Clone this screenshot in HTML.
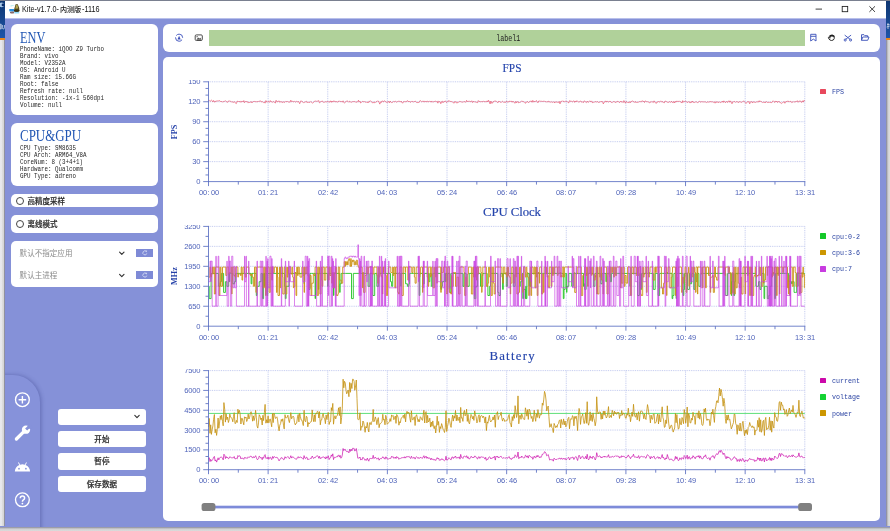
<!DOCTYPE html>
<html lang="zh">
<head>
<meta charset="utf-8">
<title>Kite-v1.7.0-内测版-1116</title>
<style>
*{box-sizing:border-box;margin:0;padding:0}
html,body{width:890px;height:531px;overflow:hidden;background:#d9d9d9;font-family:"Liberation Sans",sans-serif}
.abs,.card,.btn{position:absolute}
#desk-l{left:0;top:0;width:6px;height:531px;background:linear-gradient(90deg,#e9eaee 0,#e6e7ea 30%,#d9d9d9 45%,#d6d6d6 62%,#8a8c9a 76%,#8a8c9a 100%)}
#desk-l:before{content:"";position:absolute;left:0;top:0;width:6px;height:38px;background:linear-gradient(180deg,#0e3671 0,#164488 45%,#1c54aa 100%)}
#desk-l:after{content:"";position:absolute;left:0;top:38px;width:6px;height:1.6px;background:#e8861c}
#desk-r{left:885px;top:0;width:5px;height:531px;background:linear-gradient(90deg,#8591d8 0,#8591d8 20%,#7c8098 21%,#a9a9b0 40%,#d0d0d2 62%,#dedede 100%)}
#desk-r:before{content:"";position:absolute;left:1px;top:0;width:4px;height:38px;background:linear-gradient(180deg,#0e3671 0,#164488 45%,#1c54aa 100%)}
#desk-r:after{content:"";position:absolute;left:1px;top:38px;width:4px;height:1.6px;background:#e8861c}
#desk-b{left:0;top:526px;width:890px;height:5px;background:linear-gradient(180deg,#8591d8 0,#8591d8 14%,#7c8098 15%,#a9a9b0 36%,#d0d0d2 60%,#dbdbdb 100%)}
#desk-t{left:0;top:0;width:890px;height:1px;background:#7a8090}
#win{left:5px;top:1px;width:881px;height:525.7px;background:#8591d8;overflow:hidden}
#tbar{left:0;top:0;width:881px;height:18px;background:linear-gradient(180deg,#fff 0,#fff 17px,#b9c0ea 17px,#b9c0ea 18px)}
.ttl{position:absolute;top:2.9px;font-size:8.5px;line-height:10px;color:#111;white-space:pre;transform-origin:0 50%;transform:scaleX(.852) rotate(.01deg)}
.card{background:#fff;border-radius:6px}
.h1{position:absolute;left:9px;font-family:"Liberation Serif",serif;color:#2257b4;font-size:16.4px;line-height:16px;transform-origin:0 50%;white-space:pre}
.mono{position:absolute;left:9px;font-family:"Liberation Mono",monospace;font-size:6.6px;line-height:7px;color:#262626;white-space:pre;transform-origin:0 0;transform:scaleX(.8838)}
.radio{position:absolute;width:8px;height:8px;border:0.8px solid #444;border-radius:50%;background:#fff}
.rbtn{position:absolute;width:16.6px;height:7.4px;background:#7e8ad6}
.btn{background:#fff;border-radius:3px;left:52.6px;width:88.5px;height:16.3px}
#side{left:-6px;top:373.6px;width:41px;height:170px;background:#8692da;border-top-right-radius:27px;box-shadow:1px 0 4.5px rgba(50,58,130,.42)}
.clip{position:absolute;left:0;width:890px;overflow:hidden}
.yl{position:absolute;left:150px;width:50.2px;text-align:right;font-size:7.6px;line-height:8px;color:#5064ba;letter-spacing:-.22px;transform:rotate(.01deg)}
.xl{position:absolute;width:30px;text-align:center;font-size:7.5px;line-height:8px;color:#5064ba;white-space:nowrap;letter-spacing:-.17px;transform:rotate(.01deg)}
.xl i{display:inline-block;width:4px;font-style:normal;text-align:left;text-indent:.5px}
.lsq{position:absolute;left:820.2px;width:5.7px;height:5.7px;border-radius:.6px}
.lt{position:absolute;left:831.9px;font-family:"Liberation Mono",monospace;font-size:8px;line-height:10px;color:#263fa0;white-space:pre;transform-origin:0 50%;transform:scaleX(.8333) rotate(.01deg)}
.ct{position:absolute;left:412px;width:200px;text-align:center;font-family:"Liberation Serif",serif;font-size:12.8px;line-height:16px;color:#2444ac;white-space:pre;-webkit-text-stroke:.15px #2444ac}
.yt{position:absolute;left:154.5px;width:40px;text-align:center;font-family:"Liberation Serif",serif;font-weight:bold;font-size:8.2px;line-height:12px;color:#2440a8;transform:rotate(-90deg)}
svg{position:absolute;left:0;top:0;overflow:visible}
.gr{stroke:#b9c2ec;stroke-width:.9;stroke-dasharray:.9 .9}
.ax{stroke:#5a6ec2;stroke-width:.85}
.cjk{font-family:"Liberation Sans","Noto Sans CJK SC",sans-serif;letter-spacing:.05px}
</style>
</head>
<body>
<div id="root" style="position:absolute;left:0;top:0;width:890px;height:531px;will-change:transform">
<div id="desk-l" class="abs"></div>
<div id="desk-r" class="abs"></div>
<div id="desk-b" class="abs"></div>
<div id="desk-t" class="abs"></div>

<div id="win" class="abs">
  <div id="tbar" class="abs"></div>
  <div class="ttl" style="left:17.2px">Kite-v1.7.0-</div><div class="ttl" style="left:76.6px">-1116</div>

  <!-- ENV card -->
  <div class="card" style="left:5.8px;top:22.8px;width:147px;height:91.6px">
    <div class="h1" style="top:6.4px;transform:scaleX(.755)">ENV</div>
    <div class="mono" style="top:22px">PhoneName: iQOO Z9 Turbo
Brand: vivo
Model: V2352A
OS: Android U
Ram size: 15.66G
Root: false
Refresh rate: null
Resolution: -1x-1 560dpi
Volume: null</div>
  </div>

  <!-- CPU&GPU card -->
  <div class="card" style="left:5.8px;top:121.9px;width:147px;height:62.7px">
    <div class="h1" style="top:5.4px;transform:scaleX(.79)">CPU&amp;GPU</div>
    <div class="mono" style="top:21.7px">CPU Type: SM8635
CPU Arch: ARM64_V8A
CoreNum: 8 (3+4+1)
Hardware: Qualcomm
GPU Type: adreno</div>
  </div>

  <!-- radio cards -->
  <div class="card" style="left:5.6px;top:192.7px;width:147.4px;height:13.1px;border-radius:5px"><div class="radio" style="left:5.1px;top:3.5px"></div></div>
  <div class="card" style="left:5.6px;top:214px;width:147.4px;height:18.1px;border-radius:5px"><div class="radio" style="left:5.1px;top:5.2px"></div></div>

  <!-- dropdown card -->
  <div class="card" style="left:5.6px;top:240px;width:147.4px;height:46px;border-radius:5px">
    <div class="rbtn" style="left:125.6px;top:8.2px"></div>
    <div class="rbtn" style="left:125.6px;top:30.4px"></div>
  </div>

  <!-- side bar -->
  <div id="side" class="abs"></div>

  <!-- buttons -->
  <div class="btn" style="top:407.5px"></div>
  <div class="btn" style="top:429.9px"></div>
  <div class="btn" style="top:452.4px"></div>
  <div class="btn" style="top:474.8px"></div>

  <!-- toolbar card -->
  <div class="card" style="left:158px;top:22.6px;width:716.8px;height:28.2px">
    <div class="abs" style="left:45.6px;top:6.1px;width:596.5px;height:16.2px;background:#b0d19a"></div>
    <div class="abs" style="left:45.6px;top:9.4px;width:596.5px;text-align:center;font-family:'Liberation Mono',monospace;font-size:8.2px;line-height:10px;color:#222;transform:translate(.9px,.6px) scaleX(.813) rotate(.01deg)">label1</div>
  </div>

  <!-- chart card -->
  <div class="card" style="left:158px;top:55.8px;width:716.8px;height:464.2px;border-radius:5px"></div>
</div>

<!-- chart text labels (page coordinates) -->
<div class="clip" style="top:79.9px;height:121.7px">
<div class="yl" style="top:98.30px">0</div>
<div class="yl" style="top:78.34px">30</div>
<div class="yl" style="top:58.38px">60</div>
<div class="yl" style="top:38.42px">90</div>
<div class="yl" style="top:18.46px">120</div>
<div class="yl" style="top:-1.50px">150</div>
<div class="xl" style="left:193.50px;top:109.30px">00<i>:</i>00</div>
<div class="xl" style="left:253.13px;top:109.30px">01<i>:</i>21</div>
<div class="xl" style="left:312.76px;top:109.30px">02<i>:</i>42</div>
<div class="xl" style="left:372.39px;top:109.30px">04<i>:</i>03</div>
<div class="xl" style="left:432.02px;top:109.30px">05<i>:</i>24</div>
<div class="xl" style="left:491.65px;top:109.30px">06<i>:</i>46</div>
<div class="xl" style="left:551.28px;top:109.30px">08<i>:</i>07</div>
<div class="xl" style="left:610.91px;top:109.30px">09<i>:</i>28</div>
<div class="xl" style="left:670.54px;top:109.30px">10<i>:</i>49</div>
<div class="xl" style="left:730.17px;top:109.30px">12<i>:</i>10</div>
<div class="xl" style="left:789.80px;top:109.30px">13<i>:</i>31</div>
</div>
<div class="clip" style="top:224.5px;height:121.7px">
<div class="yl" style="top:98.30px">0</div>
<div class="yl" style="top:78.34px">650</div>
<div class="yl" style="top:58.38px">1300</div>
<div class="yl" style="top:38.42px">1950</div>
<div class="yl" style="top:18.46px">2600</div>
<div class="yl" style="top:-1.50px">3250</div>
<div class="xl" style="left:193.50px;top:109.30px">00<i>:</i>00</div>
<div class="xl" style="left:253.13px;top:109.30px">01<i>:</i>21</div>
<div class="xl" style="left:312.76px;top:109.30px">02<i>:</i>42</div>
<div class="xl" style="left:372.39px;top:109.30px">04<i>:</i>03</div>
<div class="xl" style="left:432.02px;top:109.30px">05<i>:</i>24</div>
<div class="xl" style="left:491.65px;top:109.30px">06<i>:</i>46</div>
<div class="xl" style="left:551.28px;top:109.30px">08<i>:</i>07</div>
<div class="xl" style="left:610.91px;top:109.30px">09<i>:</i>28</div>
<div class="xl" style="left:670.54px;top:109.30px">10<i>:</i>49</div>
<div class="xl" style="left:730.17px;top:109.30px">12<i>:</i>10</div>
<div class="xl" style="left:789.80px;top:109.30px">13<i>:</i>31</div>
</div>
<div class="clip" style="top:368.7px;height:121.0px">
<div class="yl" style="top:97.60px">0</div>
<div class="yl" style="top:77.78px">1500</div>
<div class="yl" style="top:57.96px">3000</div>
<div class="yl" style="top:38.14px">4500</div>
<div class="yl" style="top:18.32px">6000</div>
<div class="yl" style="top:-1.50px">7500</div>
<div class="xl" style="left:193.50px;top:108.60px">00<i>:</i>00</div>
<div class="xl" style="left:253.13px;top:108.60px">01<i>:</i>21</div>
<div class="xl" style="left:312.76px;top:108.60px">02<i>:</i>42</div>
<div class="xl" style="left:372.39px;top:108.60px">04<i>:</i>03</div>
<div class="xl" style="left:432.02px;top:108.60px">05<i>:</i>24</div>
<div class="xl" style="left:491.65px;top:108.60px">06<i>:</i>46</div>
<div class="xl" style="left:551.28px;top:108.60px">08<i>:</i>07</div>
<div class="xl" style="left:610.91px;top:108.60px">09<i>:</i>28</div>
<div class="xl" style="left:670.54px;top:108.60px">10<i>:</i>49</div>
<div class="xl" style="left:730.17px;top:108.60px">12<i>:</i>10</div>
<div class="xl" style="left:789.80px;top:108.60px">13<i>:</i>31</div>
</div>
<div class="lsq" style="top:88.80px;background:#e8485c"></div>
<div class="lt" style="top:87.00px">FPS</div>
<div class="lsq" style="top:233.40px;background:#14c828"></div>
<div class="lt" style="top:231.60px">cpu:0-2</div>
<div class="lsq" style="top:249.80px;background:#cc9600"></div>
<div class="lt" style="top:248.00px">cpu:3-6</div>
<div class="lsq" style="top:266.20px;background:#c83ce0"></div>
<div class="lt" style="top:264.40px">cpu:7</div>
<div class="lsq" style="top:377.60px;background:#cc08aa"></div>
<div class="lt" style="top:375.80px">current</div>
<div class="lsq" style="top:394.00px;background:#14d232"></div>
<div class="lt" style="top:392.20px">voltage</div>
<div class="lsq" style="top:410.40px;background:#cc9600"></div>
<div class="lt" style="top:408.60px">power</div>
<div class="ct" style="top:59.7px;transform:scaleX(.885) rotate(.01deg)">FPS</div>
<div class="ct" style="top:203.8px;letter-spacing:-.1px;transform:rotate(.01deg)">CPU Clock</div>
<div class="ct" style="top:348.2px;letter-spacing:1.25px;text-indent:1.25px;transform:rotate(.01deg)">Battery</div>
<div class="yt" style="top:125.6px">FPS</div>
<div class="yt" style="top:270.2px">MHz</div>

<!-- chart graphics + icons (page coordinates) -->
<svg width="890" height="531" viewBox="0 0 890 531">
<line x1="208.5" x2="804.8" y1="161.64" y2="161.64" class="gr"/>
<line x1="208.5" x2="804.8" y1="141.68" y2="141.68" class="gr"/>
<line x1="208.5" x2="804.8" y1="121.72" y2="121.72" class="gr"/>
<line x1="208.5" x2="804.8" y1="101.76" y2="101.76" class="gr"/>
<line x1="208.5" x2="804.8" y1="81.80" y2="81.80" class="gr"/>
<line x1="268.13" x2="268.13" y1="81.8" y2="181.6" class="gr"/>
<line x1="327.76" x2="327.76" y1="81.8" y2="181.6" class="gr"/>
<line x1="387.39" x2="387.39" y1="81.8" y2="181.6" class="gr"/>
<line x1="447.02" x2="447.02" y1="81.8" y2="181.6" class="gr"/>
<line x1="506.65" x2="506.65" y1="81.8" y2="181.6" class="gr"/>
<line x1="566.28" x2="566.28" y1="81.8" y2="181.6" class="gr"/>
<line x1="625.91" x2="625.91" y1="81.8" y2="181.6" class="gr"/>
<line x1="685.54" x2="685.54" y1="81.8" y2="181.6" class="gr"/>
<line x1="745.17" x2="745.17" y1="81.8" y2="181.6" class="gr"/>
<line x1="804.80" x2="804.80" y1="81.8" y2="181.6" class="gr"/>
<line x1="208.5" x2="804.8" y1="306.24" y2="306.24" class="gr"/>
<line x1="208.5" x2="804.8" y1="286.28" y2="286.28" class="gr"/>
<line x1="208.5" x2="804.8" y1="266.32" y2="266.32" class="gr"/>
<line x1="208.5" x2="804.8" y1="246.36" y2="246.36" class="gr"/>
<line x1="208.5" x2="804.8" y1="226.40" y2="226.40" class="gr"/>
<line x1="268.13" x2="268.13" y1="226.4" y2="326.2" class="gr"/>
<line x1="327.76" x2="327.76" y1="226.4" y2="326.2" class="gr"/>
<line x1="387.39" x2="387.39" y1="226.4" y2="326.2" class="gr"/>
<line x1="447.02" x2="447.02" y1="226.4" y2="326.2" class="gr"/>
<line x1="506.65" x2="506.65" y1="226.4" y2="326.2" class="gr"/>
<line x1="566.28" x2="566.28" y1="226.4" y2="326.2" class="gr"/>
<line x1="625.91" x2="625.91" y1="226.4" y2="326.2" class="gr"/>
<line x1="685.54" x2="685.54" y1="226.4" y2="326.2" class="gr"/>
<line x1="745.17" x2="745.17" y1="226.4" y2="326.2" class="gr"/>
<line x1="804.80" x2="804.80" y1="226.4" y2="326.2" class="gr"/>
<line x1="208.5" x2="804.8" y1="449.88" y2="449.88" class="gr"/>
<line x1="208.5" x2="804.8" y1="430.06" y2="430.06" class="gr"/>
<line x1="208.5" x2="804.8" y1="410.24" y2="410.24" class="gr"/>
<line x1="208.5" x2="804.8" y1="390.42" y2="390.42" class="gr"/>
<line x1="208.5" x2="804.8" y1="370.60" y2="370.60" class="gr"/>
<line x1="268.13" x2="268.13" y1="370.6" y2="469.7" class="gr"/>
<line x1="327.76" x2="327.76" y1="370.6" y2="469.7" class="gr"/>
<line x1="387.39" x2="387.39" y1="370.6" y2="469.7" class="gr"/>
<line x1="447.02" x2="447.02" y1="370.6" y2="469.7" class="gr"/>
<line x1="506.65" x2="506.65" y1="370.6" y2="469.7" class="gr"/>
<line x1="566.28" x2="566.28" y1="370.6" y2="469.7" class="gr"/>
<line x1="625.91" x2="625.91" y1="370.6" y2="469.7" class="gr"/>
<line x1="685.54" x2="685.54" y1="370.6" y2="469.7" class="gr"/>
<line x1="745.17" x2="745.17" y1="370.6" y2="469.7" class="gr"/>
<line x1="804.80" x2="804.80" y1="370.6" y2="469.7" class="gr"/>
<polyline points="208.5,100.72 209.2,100.32 210.0,101.25 210.7,100.87 211.4,100.18 212.2,100.70 212.9,101.90 213.6,100.44 214.4,102.00 215.1,102.08 215.9,100.89 216.6,101.14 217.3,100.96 218.1,100.94 218.8,100.88 219.5,100.52 220.3,101.47 221.0,101.36 221.7,101.59 222.5,101.92 223.2,101.85 223.9,101.24 224.7,101.38 225.4,100.64 226.1,101.51 226.9,101.95 227.6,102.35 228.4,101.00 229.1,100.64 229.8,101.30 230.6,101.17 231.3,101.91 232.0,102.14 232.8,101.89 233.5,102.45 234.2,101.45 235.0,102.74 235.7,103.11 236.4,103.57 237.2,101.04 237.9,101.48 238.6,101.50 239.4,101.63 240.1,101.05 240.9,102.37 241.6,101.42 242.3,101.35 243.1,102.04 243.8,100.55 244.5,102.68 245.3,101.64 246.0,101.26 246.7,101.70 247.5,101.64 248.2,103.05 248.9,102.30 249.7,102.37 250.4,102.32 251.1,101.48 251.9,102.91 252.6,101.94 253.4,101.55 254.1,101.35 254.8,101.56 255.6,101.71 256.3,101.72 257.0,101.82 257.8,101.63 258.5,101.46 259.2,101.37 260.0,100.90 260.7,100.92 261.4,101.99 262.2,101.71 262.9,101.84 263.6,102.55 264.4,102.07 265.1,103.17 265.9,100.56 266.6,101.91 267.3,101.99 268.1,101.48 268.8,101.65 269.5,102.27 270.3,100.58 271.0,101.86 271.7,101.78 272.5,102.18 273.2,101.61 273.9,101.73 274.7,102.28 275.4,103.16 276.1,100.27 276.9,101.87 277.6,101.70 278.4,101.36 279.1,100.82 279.8,102.43 280.6,101.68 281.3,101.99 282.0,101.55 282.8,102.73 283.5,101.62 284.2,102.28 285.0,102.24 285.7,101.39 286.4,101.61 287.2,101.48 287.9,101.64 288.6,102.07 289.4,102.06 290.1,102.22 290.8,100.17 291.6,101.62 292.3,101.17 293.1,102.02 293.8,101.65 294.5,101.32 295.3,102.16 296.0,102.00 296.7,101.29 297.5,102.06 298.2,101.24 298.9,102.11 299.7,103.72 300.4,101.90 301.1,100.69 301.9,101.73 302.6,101.88 303.3,102.51 304.1,102.74 304.8,102.12 305.6,101.75 306.3,101.28 307.0,102.70 307.8,102.14 308.5,102.30 309.2,102.22 310.0,102.47 310.7,101.54 311.4,102.14 312.2,102.92 312.9,103.09 313.6,102.28 314.4,101.29 315.1,101.31 315.8,100.96 316.6,101.36 317.3,101.22 318.1,100.98 318.8,100.60 319.5,102.81 320.3,102.32 321.0,101.35 321.7,101.42 322.5,101.22 323.2,101.58 323.9,102.67 324.7,101.87 325.4,101.72 326.1,101.98 326.9,101.78 327.6,101.48 328.3,101.81 329.1,101.67 329.8,102.23 330.6,100.82 331.3,102.34 332.0,101.08 332.8,102.14 333.5,100.90 334.2,101.44 335.0,100.97 335.7,102.08 336.4,101.62 337.2,101.93 337.9,102.16 338.6,101.12 339.4,101.26 340.1,101.23 340.8,101.66 341.6,101.60 342.3,102.10 343.1,100.81 343.8,102.52 344.5,102.90 345.3,102.13 346.0,101.88 346.7,100.89 347.5,101.07 348.2,101.46 348.9,102.28 349.7,101.21 350.4,101.82 351.1,102.16 351.9,102.22 352.6,101.60 353.3,101.59 354.1,101.63 354.8,101.54 355.6,101.99 356.3,102.19 357.0,102.10 357.8,101.67 358.5,100.20 359.2,102.14 360.0,101.26 360.7,103.04 361.4,102.46 362.2,101.65 362.9,101.29 363.6,101.75 364.4,101.64 365.1,101.73 365.8,102.39 366.6,102.14 367.3,102.02 368.1,102.96 368.8,101.42 369.5,101.79 370.3,100.67 371.0,101.45 371.7,101.87 372.5,102.85 373.2,102.90 373.9,101.79 374.7,102.85 375.4,102.40 376.1,101.74 376.9,101.61 377.6,100.86 378.3,101.06 379.1,102.39 379.8,104.13 380.6,101.77 381.3,102.47 382.0,100.86 382.8,101.37 383.5,101.85 384.2,100.80 385.0,101.07 385.7,101.87 386.4,102.17 387.2,102.69 387.9,101.46 388.6,101.60 389.4,102.77 390.1,101.03 390.8,102.19 391.6,102.57 392.3,102.43 393.1,101.83 393.8,101.45 394.5,102.01 395.3,101.10 396.0,101.69 396.7,102.21 397.5,101.61 398.2,101.57 398.9,100.99 399.7,101.45 400.4,101.85 401.1,101.05 401.9,102.37 402.6,103.21 403.3,101.75 404.1,101.87 404.8,101.45 405.6,101.74 406.3,101.79 407.0,100.76 407.8,100.82 408.5,101.90 409.2,101.20 410.0,102.24 410.7,102.06 411.4,101.50 412.2,101.68 412.9,101.34 413.6,101.94 414.4,101.55 415.1,101.22 415.8,101.44 416.6,102.54 417.3,102.67 418.1,102.05 418.8,102.71 419.5,101.46 420.3,100.46 421.0,101.35 421.7,102.04 422.5,101.34 423.2,101.82 423.9,100.89 424.7,102.05 425.4,101.54 426.1,101.18 426.9,102.15 427.6,101.11 428.3,101.77 429.1,101.30 429.8,101.46 430.6,101.80 431.3,100.98 432.0,102.29 432.8,101.44 433.5,101.87 434.2,101.58 435.0,101.26 435.7,101.26 436.4,101.66 437.2,101.29 437.9,103.16 438.6,101.26 439.4,101.61 440.1,101.74 440.8,103.73 441.6,101.63 442.3,101.22 443.0,102.81 443.8,101.49 444.5,101.54 445.3,100.87 446.0,102.10 446.7,102.49 447.5,101.56 448.2,101.61 448.9,100.42 449.7,101.44 450.4,101.43 451.1,101.59 451.9,101.61 452.6,102.08 453.3,102.55 454.1,103.23 454.8,101.39 455.5,102.19 456.3,101.69 457.0,103.23 457.8,102.25 458.5,102.16 459.2,101.54 460.0,101.74 460.7,101.60 461.4,101.92 462.2,102.12 462.9,102.17 463.6,101.77 464.4,101.58 465.1,102.15 465.8,102.17 466.6,100.34 467.3,101.66 468.0,101.15 468.8,101.40 469.5,101.28 470.3,101.64 471.0,101.61 471.7,100.76 472.5,102.50 473.2,101.27 473.9,101.98 474.7,101.76 475.4,101.91 476.1,102.14 476.9,102.41 477.6,102.65 478.3,100.56 479.1,101.61 479.8,101.22 480.5,101.93 481.3,101.68 482.0,101.42 482.8,101.95 483.5,101.16 484.2,101.64 485.0,101.61 485.7,101.72 486.4,101.80 487.2,100.77 487.9,101.97 488.6,100.27 489.4,101.87 490.1,103.94 490.8,101.03 491.6,103.16 492.3,103.24 493.0,101.53 493.8,101.76 494.5,101.13 495.3,101.32 496.0,100.78 496.7,101.64 497.5,102.57 498.2,102.44 498.9,100.96 499.7,101.75 500.4,102.21 501.1,102.26 501.9,101.93 502.6,101.29 503.3,101.80 504.1,102.70 504.8,101.75 505.5,102.48 506.3,101.34 507.0,101.25 507.8,102.49 508.5,101.97 509.2,101.01 510.0,101.62 510.7,101.33 511.4,101.17 512.2,102.28 512.9,101.05 513.6,101.79 514.4,102.81 515.1,103.27 515.8,101.28 516.6,102.80 517.3,101.84 518.0,101.47 518.8,102.96 519.5,102.45 520.3,102.20 521.0,101.61 521.7,101.13 522.5,101.26 523.2,101.98 523.9,101.52 524.7,102.47 525.4,103.37 526.1,101.93 526.9,102.10 527.6,101.55 528.3,102.48 529.1,102.36 529.8,101.30 530.5,101.28 531.3,100.97 532.0,102.28 532.8,100.37 533.5,102.15 534.2,101.27 535.0,102.02 535.7,101.46 536.4,100.47 537.2,101.71 537.9,102.79 538.6,101.07 539.4,101.00 540.1,101.69 540.8,101.05 541.6,101.32 542.3,101.46 543.0,101.37 543.8,101.22 544.5,101.32 545.3,101.66 546.0,101.47 546.7,101.96 547.5,101.74 548.2,101.07 548.9,102.23 549.7,101.67 550.4,102.17 551.1,101.58 551.9,102.09 552.6,102.35 553.3,101.83 554.1,101.96 554.8,103.02 555.5,101.75 556.3,101.93 557.0,102.37 557.8,102.20 558.5,102.45 559.2,101.38 560.0,103.86 560.7,101.55 561.4,101.67 562.2,100.75 562.9,101.47 563.6,101.15 564.4,102.00 565.1,101.65 565.8,100.94 566.6,101.54 567.3,101.64 568.0,102.47 568.8,102.82 569.5,100.74 570.3,100.79 571.0,101.78 571.7,101.07 572.5,101.84 573.2,101.22 573.9,100.85 574.7,102.36 575.4,100.95 576.1,101.93 576.9,100.67 577.6,101.40 578.3,101.96 579.1,101.83 579.8,101.61 580.5,100.93 581.3,102.11 582.0,101.70 582.7,102.05 583.5,102.53 584.2,100.82 585.0,101.55 585.7,101.95 586.4,102.60 587.2,101.10 587.9,102.26 588.6,102.02 589.4,101.32 590.1,100.87 590.8,101.78 591.6,100.91 592.3,102.74 593.0,102.20 593.8,102.24 594.5,102.18 595.2,101.47 596.0,102.11 596.7,101.93 597.5,101.54 598.2,102.45 598.9,102.16 599.7,102.08 600.4,101.71 601.1,101.60 601.9,101.54 602.6,101.64 603.3,103.88 604.1,102.27 604.8,101.97 605.5,100.86 606.3,102.13 607.0,101.05 607.7,101.56 608.5,102.19 609.2,101.39 610.0,101.51 610.7,101.45 611.4,102.45 612.2,102.61 612.9,101.82 613.6,101.58 614.4,101.77 615.1,101.83 615.8,102.72 616.6,101.55 617.3,101.42 618.0,101.49 618.8,101.76 619.5,102.68 620.2,101.84 621.0,101.00 621.7,102.23 622.5,101.83 623.2,102.52 623.9,100.55 624.7,101.82 625.4,103.20 626.1,101.37 626.9,102.13 627.6,102.39 628.3,102.43 629.1,102.88 629.8,101.54 630.5,102.65 631.3,101.39 632.0,101.56 632.7,100.95 633.5,101.67 634.2,101.65 635.0,102.67 635.7,101.49 636.4,102.38 637.2,102.45 637.9,102.24 638.6,102.07 639.4,101.59 640.1,101.90 640.8,101.49 641.6,101.86 642.3,100.63 643.0,101.51 643.8,101.38 644.5,102.51 645.2,100.94 646.0,101.18 646.7,101.87 647.5,101.70 648.2,101.88 648.9,102.32 649.7,102.93 650.4,101.79 651.1,102.31 651.9,101.43 652.6,101.97 653.3,102.47 654.1,100.83 654.8,102.09 655.5,102.95 656.3,103.41 657.0,101.65 657.7,102.13 658.5,101.53 659.2,102.17 660.0,101.56 660.7,100.85 661.4,101.92 662.2,101.95 662.9,101.57 663.6,102.58 664.4,102.75 665.1,100.99 665.8,101.36 666.6,101.70 667.3,102.34 668.0,101.76 668.8,102.48 669.5,101.58 670.2,102.10 671.0,102.20 671.7,101.27 672.5,102.50 673.2,102.72 673.9,101.37 674.7,102.97 675.4,101.47 676.1,102.06 676.9,100.88 677.6,101.51 678.3,101.38 679.1,101.48 679.8,101.31 680.5,101.80 681.3,102.04 682.0,103.04 682.7,100.62 683.5,102.12 684.2,101.60 685.0,101.60 685.7,101.19 686.4,101.53 687.2,102.65 687.9,102.08 688.6,101.68 689.4,101.83 690.1,103.07 690.8,101.76 691.6,102.39 692.3,101.01 693.0,102.47 693.8,102.13 694.5,102.54 695.2,101.95 696.0,101.96 696.7,101.95 697.5,102.58 698.2,102.56 698.9,101.53 699.7,101.42 700.4,101.92 701.1,102.29 701.9,101.31 702.6,102.10 703.3,101.86 704.1,102.03 704.8,101.79 705.5,101.91 706.3,102.46 707.0,102.37 707.7,101.84 708.5,102.00 709.2,102.31 710.0,101.20 710.7,101.81 711.4,101.84 712.2,101.70 712.9,101.94 713.6,102.29 714.4,101.84 715.1,103.18 715.8,101.57 716.6,102.33 717.3,101.58 718.0,102.84 718.8,102.16 719.5,101.92 720.2,102.47 721.0,102.61 721.7,101.97 722.5,101.03 723.2,102.47 723.9,100.84 724.7,101.77 725.4,102.75 726.1,101.85 726.9,101.32 727.6,102.53 728.3,101.39 729.1,100.70 729.8,102.27 730.5,100.89 731.3,102.34 732.0,103.76 732.7,101.84 733.5,101.76 734.2,101.48 734.9,101.67 735.7,102.30 736.4,101.67 737.2,102.11 737.9,101.59 738.6,102.63 739.4,101.55 740.1,102.10 740.8,101.79 741.6,102.40 742.3,101.80 743.0,101.32 743.8,101.13 744.5,101.52 745.2,102.51 746.0,103.54 746.7,102.51 747.4,101.61 748.2,102.20 748.9,101.32 749.7,103.79 750.4,102.41 751.1,101.27 751.9,101.98 752.6,103.03 753.3,101.64 754.1,102.14 754.8,102.15 755.5,102.48 756.3,101.64 757.0,102.34 757.7,101.51 758.5,102.06 759.2,100.68 759.9,101.86 760.7,101.06 761.4,101.62 762.2,102.28 762.9,102.49 763.6,102.20 764.4,101.97 765.1,102.99 765.8,101.78 766.6,101.70 767.3,102.44 768.0,102.31 768.8,102.39 769.5,102.30 770.2,102.50 771.0,102.27 771.7,102.74 772.4,101.49 773.2,100.75 773.9,101.52 774.7,102.52 775.4,100.94 776.1,101.79 776.9,101.25 777.6,102.54 778.3,101.40 779.1,101.91 779.8,101.83 780.5,102.95 781.3,103.55 782.0,102.94 782.7,102.53 783.5,102.00 784.2,101.61 784.9,103.27 785.7,101.67 786.4,101.51 787.2,101.81 787.9,100.81 788.6,101.65 789.4,101.69 790.1,101.58 790.8,101.16 791.6,102.52 792.3,101.93 793.0,102.40 793.8,101.52 794.5,101.97 795.2,101.66 796.0,101.98 796.7,101.16 797.4,100.73 798.2,102.29 798.9,101.18 799.7,101.10 800.4,100.91 801.1,102.19 801.9,102.21 802.6,100.77 803.3,102.12 804.1,100.26 804.8,101.16" fill="none" stroke="#e8405a" stroke-width="0.6" stroke-linejoin="round"/>
<path d="M208.5 286.3H209.2V298.6H211.1V273.4H217.0V273.4H218.4V286.3H220.3V281.7H221.4V273.4H223.6V292.4H225.4V281.7H226.9V286.3H228.7V273.4H229.5V281.7H229.8V273.4H230.6V273.4H231.3V273.4H232.8V283.8H234.6V281.7H235.7V273.4H236.4V273.4H239.4V273.4H245.3V273.4H251.1V283.8H251.9V273.4H253.4V273.4H254.8V273.4H256.3V295.5H257.0V286.3H257.4V286.3H259.2V281.7H261.1V273.4H261.8V273.4H262.5V298.6H263.6V273.4H264.4V286.3H264.7V273.4H265.5V273.4H267.0V295.5H267.7V273.4H269.2V273.4H275.0V273.4H277.2V273.4H283.1V273.4H284.6V286.3H285.3V298.6H286.1V286.3H287.2V286.3H289.0V281.7H289.4V273.4H295.3V273.4H297.5V273.4H298.2V273.4H301.1V273.4H304.1V283.8H304.5V273.4H307.4V273.4H308.9V289.4H310.0V273.4H311.4V273.4H313.6V273.4H315.1V298.6H315.5V273.4H318.4V289.4H318.8V273.4H321.7V273.4H323.2V273.4H327.6V286.3H328.0V273.4H330.2V273.4H333.1V286.3H333.5V295.5H333.9V273.4H339.7V292.4H340.1V283.8H341.2V273.4H345.6V273.4H351.5V298.6H353.3V273.4H359.2V273.4H365.1V273.4H368.1V286.3H369.9V273.4H372.8V295.5H374.7V273.4H376.9V286.3H378.7V273.4H383.1V273.4H389.0V273.4H390.5V281.7H391.6V286.3H392.3V286.3H392.7V273.4H398.6V273.4H400.8V286.3H401.1V273.4H405.6V283.8H407.4V286.3H408.1V286.3H408.9V283.8H409.6V273.4H411.8V273.4H413.3V273.4H419.2V295.5H419.9V273.4H420.6V273.4H422.8V283.8H424.3V273.4H427.2V273.4H428.7V281.7H429.8V273.4H431.3V286.3H432.8V273.4H433.5V273.4H436.4V273.4H440.8V289.4H441.6V286.3H442.3V281.7H444.2V273.4H444.9V273.4H445.6V281.7H446.0V273.4H447.5V289.4H447.8V273.4H450.0V292.4H451.1V273.4H457.0V273.4H462.9V286.3H464.0V273.4H466.2V286.3H468.0V286.3H469.2V273.4H473.6V273.4H474.3V298.6H475.8V286.3H477.6V273.4H478.3V273.4H480.5V286.3H481.7V286.3H482.8V273.4H484.2V273.4H487.2V286.3H487.9V295.5H489.0V295.5H489.7V286.3H490.5V273.4H494.9V273.4H497.8V292.4H498.9V295.5H500.4V273.4H502.6V289.4H503.3V273.4H506.3V286.3H507.4V273.4H513.3V286.3H515.1V273.4H519.5V286.3H520.3V281.7H522.1V273.4H522.8V298.6H523.6V289.4H525.4V298.6H525.8V286.3H526.1V298.6H526.9V273.4H529.1V286.3H529.4V273.4H530.2V286.3H530.9V273.4H531.6V273.4H533.9V273.4H539.7V273.4H541.9V273.4H542.7V273.4H544.9V273.4H549.3V273.4H551.5V273.4H557.4V273.4H561.8V273.4H563.3V298.6H564.0V289.4H565.1V273.4H565.8V273.4H566.6V292.4H566.9V286.3H568.8V273.4H571.7V286.3H573.2V273.4H579.1V273.4H582.0V273.4H583.5V286.3H583.9V283.8H584.6V289.4H586.1V273.4H591.9V273.4H593.4V286.3H594.9V273.4H600.8V283.8H602.2V273.4H603.7V273.4H605.9V281.7H606.6V273.4H608.1V273.4H610.3V281.7H611.4V273.4H617.3V273.4H621.7V273.4H623.9V273.4H628.3V273.4H629.8V286.3H630.9V273.4H633.1V273.4H637.5V295.5H639.4V281.7H639.7V273.4H640.5V289.4H641.6V273.4H647.5V273.4H650.4V273.4H653.3V289.4H655.2V273.4H658.1V295.5H659.6V273.4H662.5V273.4H664.7V273.4H669.1V273.4H672.1V298.6H672.8V295.5H673.9V273.4H675.4V273.4H676.1V298.6H676.5V273.4H682.4V273.4H683.1V295.5H683.8V289.4H684.6V273.4H687.5V289.4H689.4V273.4H690.1V283.8H691.6V273.4H693.8V289.4H694.9V273.4H696.3V281.7H697.5V273.4H698.9V286.3H700.8V273.4H703.7V273.4H708.1V273.4H709.6V273.4H714.0V273.4H719.9V273.4H724.3V273.4H725.8V295.5H727.6V273.4H730.5V273.4H731.3V295.5H731.6V281.7H733.1V273.4H733.8V295.5H734.6V281.7H735.3V273.4H739.7V273.4H742.7V273.4H744.1V273.4H750.0V273.4H755.9V286.3H757.7V286.3H758.5V281.7H759.9V289.4H761.1V286.3H761.8V273.4H764.0V298.6H764.7V286.3H765.5V286.3H767.3V298.6H768.8V295.5H769.9V286.3H771.7V273.4H773.2V273.4H773.9V273.4H774.7V298.6H775.4V273.4H779.8V273.4H785.7V273.4H788.6V281.7H789.7V281.7H791.6V283.8H792.3V281.7H794.1V292.4H795.6V292.4H796.7V273.4H797.4V286.3H798.2V273.4H802.6V273.4H804.8" fill="none" stroke="#22c422" stroke-width="0.9"/>
<path d="M208.5 277.1H209.2V277.1H210.0V267.1H210.3V275.5H211.1V277.1H211.4V274.0H212.2V267.1H212.5V274.0H213.3V267.1H213.6V267.1H214.4V294.0H215.5V267.1H216.2V267.1H217.0V267.1H218.1V267.1H219.2V295.5H219.9V283.2H220.3V267.1H221.0V286.3H222.5V267.1H223.6V267.1H223.9V267.1H224.3V267.1H225.8V275.5H226.9V267.1H227.6V267.1H228.4V267.1H228.7V274.0H229.5V272.5H230.6V272.5H230.9V267.1H231.7V294.0H232.0V280.1H232.4V267.1H233.1V267.1H233.9V275.5H235.0V277.1H235.7V267.1H236.1V267.1H237.2V267.1H237.9V277.1H238.3V274.0H239.4V274.0H240.5V275.5H241.2V267.1H242.0V280.1H242.7V274.0H243.1V267.1H243.8V267.1H244.5V274.0H245.3V277.1H246.4V267.1H247.1V267.1H248.2V267.1H248.9V274.0H249.7V274.0H250.4V275.5H251.5V274.0H252.2V277.1H253.4V286.3H254.5V267.1H255.6V267.1H255.9V292.4H256.7V267.1H257.4V267.1H257.8V267.1H258.9V267.1H259.6V267.1H261.1V267.1H261.4V267.1H262.5V267.1H263.3V287.8H264.4V267.1H265.5V295.5H266.2V272.5H266.6V267.1H267.0V272.5H267.7V267.1H268.1V267.1H269.2V292.4H270.3V267.1H271.7V280.1H272.5V267.1H273.2V272.5H274.3V267.1H275.0V267.1H275.8V267.1H276.5V292.4H277.2V267.1H277.6V277.1H278.0V295.5H279.5V267.1H280.2V287.8H280.6V267.1H281.3V267.1H282.4V277.1H282.8V294.0H284.2V267.1H285.0V275.5H285.3V294.0H286.8V267.1H287.2V277.1H287.9V267.1H288.3V274.0H289.0V267.1H289.4V267.1H290.8V274.0H292.0V267.1H292.7V277.1H293.4V287.8H293.8V286.3H294.9V272.5H296.0V295.5H296.7V267.1H297.5V275.5H298.2V267.1H299.3V274.0H300.0V277.1H300.8V277.1H301.9V267.1H302.6V267.1H303.3V275.5H304.1V292.4H304.5V267.1H305.2V274.0H306.3V267.1H307.8V275.5H308.9V277.1H309.6V287.8H310.0V275.5H311.1V295.5H311.8V283.2H313.3V274.0H314.0V275.5H315.1V267.1H315.8V267.1H317.3V295.5H318.4V267.1H319.2V267.1H319.5V274.0H319.9V294.0H321.0V267.1H321.7V280.1H322.1V286.3H322.8V267.1H324.3V280.1H325.8V267.1H327.2V267.1H328.0V275.5H328.3V280.1H329.1V267.1H329.8V275.5H330.9V267.1H331.3V267.1H331.7V283.2H332.4V272.5H333.5V287.8H334.6V272.5H335.7V267.1H336.4V295.5H337.9V294.0H338.3V267.1H339.7V280.1H341.2V283.2H342.7V267.1H344.2V261.7H344.9V261.7H345.3V266.3H345.6V261.7H346.4V264.8H347.1V261.7H347.5V264.8H348.2V260.2H348.9V258.6H349.3V260.2H350.0V266.3H350.8V258.6H351.1V266.3H351.5V264.8H351.9V261.7H352.2V260.2H352.6V261.7H353.3V260.2H354.1V264.8H354.8V261.7H355.6V264.8H356.3V260.2H357.0V260.2H357.4V264.8H358.1V267.1H359.6V274.0H360.0V267.1H360.7V267.1H362.2V272.5H362.5V287.8H362.9V272.5H363.6V292.4H365.1V275.5H366.2V267.1H366.9V267.1H367.7V274.0H368.4V267.1H368.8V267.1H369.9V267.1H371.4V267.1H372.8V274.0H373.6V274.0H373.9V267.1H375.4V267.1H376.1V267.1H376.9V275.5H377.6V283.2H378.7V267.1H379.1V277.1H379.8V267.1H380.9V275.5H381.7V277.1H382.4V294.0H382.8V267.1H383.5V272.5H383.9V267.1H384.6V267.1H385.0V267.1H385.7V275.5H386.4V295.5H387.5V274.0H388.3V267.1H389.7V267.1H390.8V272.5H391.9V272.5H392.7V267.1H393.1V275.5H393.8V267.1H394.5V267.1H394.9V287.8H395.6V267.1H397.1V274.0H397.8V292.4H398.6V294.0H399.3V272.5H400.0V267.1H401.1V267.1H401.9V295.5H403.3V267.1H403.7V267.1H404.1V267.1H405.2V272.5H405.6V267.1H406.7V267.1H407.8V280.1H408.5V267.1H408.9V267.1H410.0V267.1H410.7V267.1H411.8V272.5H412.9V267.1H414.4V277.1H415.1V283.2H416.2V267.1H416.9V267.1H417.7V267.1H419.2V277.1H419.9V274.0H420.6V267.1H421.7V267.1H422.5V292.4H422.8V283.2H423.2V267.1H423.9V267.1H424.7V267.1H425.4V267.1H426.5V267.1H427.2V277.1H428.0V286.3H428.7V267.1H429.1V267.1H430.6V277.1H430.9V275.5H431.7V267.1H432.0V267.1H433.1V287.8H434.6V267.1H435.3V274.0H435.7V277.1H436.1V267.1H436.8V283.2H437.2V267.1H437.9V267.1H438.6V267.1H439.0V267.1H439.4V267.1H440.8V292.4H441.2V267.1H441.6V272.5H442.3V272.5H443.4V267.1H444.9V267.1H445.6V267.1H446.7V294.0H447.5V280.1H447.8V267.1H449.3V292.4H450.8V294.0H451.5V275.5H451.9V286.3H453.3V272.5H454.4V272.5H455.5V286.3H457.0V277.1H457.8V277.1H458.5V294.0H460.0V267.1H460.3V267.1H461.8V267.1H462.5V267.1H464.0V272.5H464.7V295.5H465.8V277.1H466.6V286.3H467.7V274.0H468.4V267.1H469.2V267.1H470.3V267.1H470.6V267.1H471.4V294.0H472.8V267.1H473.6V277.1H473.9V267.1H475.4V277.1H475.8V267.1H476.5V280.1H476.9V267.1H478.0V274.0H478.7V267.1H479.4V267.1H480.9V272.5H481.7V292.4H482.0V275.5H482.8V267.1H483.5V267.1H485.0V267.1H485.7V267.1H486.4V286.3H487.9V283.2H488.6V267.1H489.4V272.5H489.7V277.1H490.5V267.1H491.2V295.5H492.3V267.1H493.4V283.2H494.2V294.0H495.3V267.1H496.0V267.1H496.4V267.1H497.5V267.1H498.9V267.1H499.3V267.1H500.8V267.1H501.9V277.1H503.0V283.2H503.3V267.1H504.4V267.1H504.8V274.0H505.9V272.5H506.6V277.1H507.0V267.1H507.4V275.5H507.8V267.1H508.5V275.5H509.2V277.1H509.6V277.1H510.3V294.0H510.7V283.2H511.8V267.1H513.3V283.2H514.4V275.5H515.1V267.1H515.8V277.1H516.2V267.1H516.9V294.0H518.4V292.4H519.5V267.1H519.9V267.1H520.6V280.1H522.1V274.0H522.8V292.4H523.6V267.1H525.0V272.5H525.4V277.1H526.1V267.1H526.9V272.5H527.6V277.1H528.7V295.5H529.4V286.3H530.2V267.1H530.5V267.1H530.9V295.5H531.6V267.1H533.1V274.0H534.2V267.1H535.0V287.8H535.7V267.1H536.4V277.1H536.8V267.1H537.2V295.5H537.9V272.5H539.0V274.0H539.4V283.2H539.7V267.1H540.8V267.1H541.6V294.0H542.7V274.0H543.4V292.4H544.1V267.1H544.9V267.1H545.3V267.1H546.0V274.0H546.4V267.1H547.1V277.1H547.8V275.5H548.2V286.3H548.9V287.8H549.3V267.1H550.0V267.1H551.1V286.3H551.9V267.1H552.6V275.5H553.3V267.1H554.1V274.0H554.8V267.1H556.3V267.1H556.6V267.1H557.4V275.5H558.1V267.1H559.2V267.1H560.0V274.0H560.3V272.5H560.7V277.1H561.1V275.5H561.8V277.1H562.2V267.1H563.6V277.1H564.4V267.1H565.1V267.1H565.8V267.1H566.2V267.1H567.3V267.1H568.0V267.1H568.8V267.1H569.9V267.1H571.4V267.1H572.5V267.1H573.9V272.5H574.7V292.4H576.1V274.0H576.9V274.0H577.2V267.1H577.6V267.1H579.1V267.1H579.8V267.1H580.5V267.1H581.3V295.5H582.7V275.5H583.5V275.5H583.9V274.0H584.6V267.1H586.1V275.5H586.8V267.1H587.5V286.3H588.3V274.0H589.0V267.1H590.1V274.0H590.5V267.1H591.6V275.5H591.9V274.0H592.7V267.1H593.4V274.0H594.1V280.1H595.2V275.5H595.6V277.1H596.0V267.1H596.7V294.0H597.1V267.1H597.5V294.0H598.9V267.1H599.7V277.1H600.8V267.1H601.5V280.1H603.0V294.0H603.7V267.1H605.2V267.1H606.6V275.5H607.0V294.0H608.1V274.0H608.9V267.1H610.0V277.1H610.3V267.1H611.4V272.5H612.5V267.1H612.9V267.1H613.6V277.1H614.4V267.1H615.5V275.5H616.6V267.1H618.0V267.1H618.8V267.1H619.5V267.1H620.6V287.8H621.0V267.1H621.4V283.2H622.8V267.1H624.3V286.3H625.0V275.5H626.1V283.2H627.6V267.1H628.3V267.1H629.1V267.1H630.5V295.5H631.6V267.1H633.1V274.0H633.9V267.1H634.2V267.1H635.0V267.1H635.7V267.1H636.4V275.5H637.5V267.1H638.3V275.5H639.0V267.1H639.7V267.1H640.8V294.0H641.2V295.5H642.7V267.1H643.0V267.1H643.4V277.1H644.1V274.0H645.2V267.1H646.0V267.1H646.4V292.4H647.1V267.1H648.6V277.1H649.3V272.5H650.0V267.1H651.5V267.1H653.0V280.1H653.3V280.1H654.8V267.1H655.5V272.5H656.3V267.1H657.7V267.1H658.1V272.5H658.8V267.1H659.2V267.1H660.7V267.1H661.4V287.8H662.5V294.0H663.6V283.2H664.7V267.1H665.8V267.1H666.6V295.5H666.9V272.5H668.0V267.1H669.1V267.1H669.9V287.8H671.3V277.1H672.1V272.5H672.5V267.1H673.9V267.1H675.4V295.5H675.8V267.1H676.5V277.1H677.2V286.3H678.3V267.1H678.7V267.1H680.2V267.1H681.6V292.4H682.4V287.8H682.7V277.1H683.1V283.2H683.8V280.1H684.2V277.1H685.0V267.1H686.1V292.4H686.8V274.0H687.9V272.5H688.6V267.1H689.0V286.3H689.4V280.1H690.1V277.1H690.8V272.5H691.6V267.1H692.3V272.5H692.7V277.1H693.4V267.1H694.5V272.5H694.9V272.5H695.6V292.4H696.0V267.1H697.5V294.0H697.8V267.1H699.3V267.1H700.0V267.1H701.1V274.0H702.2V267.1H702.6V287.8H703.0V267.1H704.1V267.1H704.8V267.1H705.5V287.8H706.3V267.1H707.0V267.1H708.5V275.5H709.2V275.5H710.0V267.1H710.3V292.4H710.7V277.1H711.8V277.1H712.5V275.5H713.3V292.4H714.4V267.1H715.5V277.1H716.6V280.1H718.0V267.1H719.5V267.1H720.6V267.1H721.3V267.1H722.8V267.1H723.6V274.0H724.3V267.1H725.0V275.5H725.4V267.1H726.1V267.1H727.6V267.1H728.3V272.5H729.1V267.1H729.4V272.5H730.5V294.0H732.0V272.5H732.4V292.4H733.8V267.1H734.2V294.0H735.3V267.1H736.1V287.8H737.2V274.0H737.9V267.1H738.3V283.2H739.4V287.8H740.8V277.1H741.6V294.0H743.0V267.1H743.4V267.1H744.9V275.5H745.2V294.0H745.6V267.1H746.0V267.1H747.4V275.5H748.2V267.1H749.7V295.5H750.4V267.1H751.1V295.5H751.5V267.1H752.2V295.5H753.7V277.1H754.1V275.5H755.2V267.1H755.9V277.1H757.0V275.5H758.1V275.5H758.8V274.0H759.2V267.1H759.9V275.5H760.7V267.1H761.4V286.3H762.9V267.1H763.6V283.2H764.0V280.1H765.5V267.1H766.2V267.1H767.3V275.5H767.7V267.1H769.1V267.1H770.6V267.1H772.1V277.1H772.4V267.1H772.8V275.5H773.2V272.5H774.3V267.1H774.7V274.0H775.0V267.1H776.5V295.5H777.2V267.1H778.0V275.5H778.3V272.5H778.7V267.1H779.4V294.0H779.8V267.1H780.5V267.1H781.3V267.1H782.7V272.5H783.5V267.1H783.8V267.1H785.3V267.1H786.4V267.1H787.5V287.8H788.3V280.1H788.6V294.0H789.0V275.5H789.7V295.5H790.1V267.1H790.8V267.1H791.6V267.1H792.3V286.3H793.4V267.1H794.1V267.1H795.2V272.5H796.0V286.3H797.4V272.5H798.2V272.5H798.9V267.1H799.7V294.0H800.0V275.5H800.4V292.4H801.9V272.5H802.2V277.1H803.0V267.1H803.3V274.0H804.4V287.8H804.8" fill="none" stroke="#cc9215" stroke-width="0.9"/>
<path d="M208.5 281.7H210.0V261.1H210.7V281.7H211.1V261.1H212.2V306.2H215.9V256.2H216.2V306.2H218.1V256.2H218.8V295.5H226.9V261.1H227.2V306.2H228.7V256.2H229.1V281.7H229.5V261.1H230.6V306.2H231.7V256.2H232.8V287.8H233.9V266.3H234.6V287.8H236.1V266.3H236.4V306.2H244.5V256.2H244.9V281.7H246.0V256.2H246.4V306.2H248.6V261.1H248.9V306.2H257.0V261.1H257.4V306.2H260.3V261.1H261.4V306.2H262.2V261.1H262.9V306.2H265.9V256.2H266.2V306.2H267.0V261.1H267.3V306.2H267.7V258.6H268.1V287.8H269.9V256.2H271.0V306.2H271.7V258.6H272.1V306.2H272.5V266.3H273.2V306.2H281.3V258.6H281.7V306.2H285.3V261.1H285.7V281.7H288.6V261.1H289.0V306.2H289.4V266.3H290.5V281.7H294.2V261.1H294.5V306.2H302.6V261.1H303.0V281.7H305.2V256.2H306.3V306.2H307.4V256.2H307.8V306.2H308.1V261.1H308.5V306.2H308.9V258.6H309.6V295.5H316.2V261.1H316.6V306.2H320.3V261.1H320.6V306.2H321.7V256.2H322.5V306.2H327.6V256.2H328.3V295.5H328.7V256.2H329.8V306.2H331.3V256.2H332.0V306.2H332.4V258.6H332.8V287.8H333.1V261.1H333.5V287.8H334.6V266.3H335.3V306.2H335.7V258.6H336.1V306.2H344.2V258.6H344.9V257.1H346.0V258.6H347.1V258.6H347.8V257.1H348.9V257.1H349.7V256.2H350.8V256.2H351.9V257.1H352.6V256.2H353.7V256.2H354.1V257.1H354.8V256.2H355.6V257.1H356.7V257.1H357.8V244.8H358.5V258.6H358.9V295.5H359.6V258.6H360.0V306.2H360.3V261.1H360.7V295.5H361.1V256.2H361.8V306.2H364.0V256.2H364.4V306.2H366.2V261.1H366.6V281.7H367.7V261.1H368.8V306.2H370.3V266.3H370.6V306.2H371.0V266.3H371.4V306.2H371.7V261.1H372.5V306.2H377.6V266.3H378.3V306.2H379.4V256.2H379.8V306.2H381.3V256.2H381.7V306.2H382.4V261.1H382.8V306.2H384.6V261.1H385.0V306.2H385.3V258.6H385.7V306.2H388.6V261.1H389.0V287.8H397.1V256.2H397.5V306.2H398.9V256.2H399.3V306.2H400.0V256.2H400.8V306.2H401.1V256.2H401.9V306.2H408.5V261.1H408.9V281.7H409.2V266.3H410.0V306.2H418.1V256.2H418.4V281.7H418.8V256.2H419.5V306.2H423.2V261.1H423.6V287.8H423.9V261.1H424.3V306.2H427.2V261.1H427.6V295.5H432.8V261.1H433.1V295.5H435.0V261.1H435.3V306.2H436.1V258.6H436.8V306.2H437.2V258.6H437.9V281.7H441.6V261.1H442.7V287.8H444.2V261.1H444.5V306.2H444.9V256.2H445.6V306.2H447.1V261.1H447.8V306.2H448.9V266.3H449.7V287.8H451.9V256.2H452.2V306.2H452.6V256.2H453.0V306.2H456.7V261.1H457.0V306.2H458.1V261.1H458.9V306.2H459.2V256.2H460.0V306.2H461.1V266.3H462.2V306.2H465.1V266.3H465.8V306.2H466.2V261.1H467.3V306.2H473.9V261.1H474.3V295.5H474.7V261.1H475.0V306.2H475.4V256.2H475.8V287.8H476.1V256.2H476.9V306.2H477.6V266.3H478.3V306.2H485.0V261.1H485.3V306.2H490.5V256.2H491.2V281.7H494.9V261.1H495.6V306.2H497.5V258.6H498.6V306.2H500.0V258.6H500.4V306.2H507.0V258.6H508.1V287.8H510.0V258.6H510.3V306.2H513.3V258.6H514.0V306.2H514.7V261.1H515.5V306.2H516.9V256.2H517.7V306.2H518.0V256.2H518.4V306.2H521.4V256.2H521.7V306.2H523.6V266.3H524.7V306.2H529.8V261.1H530.9V281.7H531.3V261.1H531.6V287.8H536.8V261.1H537.9V306.2H541.6V261.1H541.9V306.2H544.9V256.2H545.3V306.2H545.6V261.1H546.0V306.2H547.5V261.1H547.8V287.8H551.5V261.1H551.9V281.7H554.1V256.2H554.8V306.2H557.0V256.2H557.8V306.2H558.9V261.1H559.6V306.2H560.7V261.1H561.4V287.8H568.0V266.3H568.4V281.7H572.1V256.2H572.5V287.8H573.2V258.6H573.9V287.8H576.1V266.3H576.5V306.2H578.7V256.2H579.1V306.2H580.5V256.2H580.9V306.2H584.6V258.6H585.0V306.2H585.3V258.6H585.7V306.2H587.9V256.2H588.3V306.2H589.4V261.1H590.5V287.8H590.8V258.6H591.2V306.2H593.4V256.2H594.1V306.2H596.4V261.1H597.1V306.2H600.0V256.2H600.8V306.2H602.6V258.6H603.3V306.2H603.7V261.1H604.4V306.2H607.4V266.3H608.1V306.2H609.2V261.1H609.6V306.2H610.0V261.1H611.1V306.2H613.3V256.2H614.0V306.2H615.8V261.1H616.9V295.5H618.8V266.3H619.5V306.2H620.6V258.6H621.0V287.8H622.8V256.2H623.6V306.2H628.7V266.3H629.1V295.5H630.9V256.2H631.3V306.2H634.2V256.2H635.3V281.7H637.2V256.2H637.5V306.2H637.9V256.2H638.3V306.2H639.7V261.1H640.1V306.2H640.5V266.3H640.8V287.8H641.9V261.1H643.0V281.7H646.0V256.2H646.4V295.5H648.2V261.1H648.6V306.2H652.2V261.1H652.6V306.2H657.7V256.2H658.5V306.2H658.8V256.2H659.2V287.8H664.4V256.2H665.1V306.2H665.8V256.2H666.2V281.7H668.4V258.6H669.1V287.8H675.8V261.1H676.5V306.2H676.9V258.6H677.2V306.2H677.6V256.2H678.3V306.2H678.7V258.6H679.4V306.2H682.4V256.2H683.1V306.2H686.1V256.2H687.2V306.2H690.1V256.2H690.5V281.7H690.8V261.1H691.6V281.7H693.0V261.1H693.8V306.2H700.4V261.1H700.8V287.8H701.9V261.1H702.2V306.2H704.1V261.1H704.8V306.2H710.0V256.2H710.3V287.8H712.5V261.1H713.3V287.8H718.4V256.2H719.1V306.2H722.8V261.1H723.2V306.2H723.6V261.1H724.3V306.2H724.7V256.2H725.0V295.5H728.0V266.3H729.1V306.2H732.7V261.1H733.8V306.2H739.0V258.6H739.7V306.2H740.1V261.1H740.5V306.2H740.8V261.1H741.2V306.2H744.9V256.2H745.2V281.7H747.4V261.1H747.8V306.2H748.2V261.1H748.6V306.2H750.8V256.2H751.5V306.2H752.2V256.2H752.6V306.2H756.3V261.1H756.6V306.2H758.8V261.1H759.2V306.2H761.4V256.2H761.8V281.7H766.9V256.2H767.3V306.2H768.4V266.3H769.1V306.2H769.5V256.2H769.9V306.2H770.2V256.2H770.6V306.2H771.0V258.6H771.3V306.2H771.7V256.2H772.4V306.2H773.9V261.1H774.7V306.2H775.0V258.6H776.1V306.2H779.1V256.2H779.4V306.2H781.6V256.2H782.0V306.2H783.8V261.1H784.2V306.2H785.7V256.2H786.1V306.2H786.4V256.2H786.8V295.5H789.7V256.2H790.1V306.2H790.5V256.2H790.8V306.2H797.4V256.2H797.8V295.5H798.9V256.2H799.7V295.5H800.4V256.2H801.1V306.2H804.8" fill="none" stroke="#c63ae0" stroke-width="0.62"/>
<line x1="208.5" x2="804.8" y1="413.41" y2="413.41" stroke="#5fe07a" stroke-width="1"/>
<polyline points="208.5,426.9 209.2,418.4 210.0,433.3 210.7,424.8 211.4,434.4 212.2,429.4 212.9,425.9 213.6,419.3 214.4,414.5 215.1,432.8 215.9,429.2 216.6,435.4 217.3,429.5 218.1,418.0 218.8,428.3 219.5,423.1 220.3,415.8 221.0,419.6 221.7,415.1 222.5,421.5 223.2,425.8 223.9,402.6 224.7,409.2 225.4,422.1 226.1,413.8 226.9,419.7 227.6,417.0 228.4,422.5 229.1,420.0 229.8,414.1 230.6,417.1 231.3,417.9 232.0,418.4 232.8,421.8 233.5,416.4 234.2,412.7 235.0,423.6 235.7,423.3 236.4,420.4 237.2,422.5 237.9,409.2 238.6,413.3 239.4,410.4 240.1,413.7 240.9,424.0 241.6,418.3 242.3,418.4 243.1,422.1 243.8,424.8 244.5,416.8 245.3,418.1 246.0,417.0 246.7,421.5 247.5,419.6 248.2,414.1 248.9,419.0 249.7,417.2 250.4,413.0 251.1,411.7 251.9,414.6 252.6,421.2 253.4,415.9 254.1,420.6 254.8,417.9 255.6,410.3 256.3,417.2 257.0,425.9 257.8,428.1 258.5,422.9 259.2,414.7 260.0,416.1 260.7,419.6 261.4,418.0 262.2,425.0 262.9,415.3 263.6,420.6 264.4,412.6 265.1,404.4 265.9,423.2 266.6,419.7 267.3,422.9 268.1,415.8 268.8,422.9 269.5,419.7 270.3,418.9 271.0,422.9 271.7,426.8 272.5,413.6 273.2,422.6 273.9,413.1 274.7,415.5 275.4,418.5 276.1,417.6 276.9,416.8 277.6,419.9 278.4,427.0 279.1,430.9 279.8,425.2 280.6,423.6 281.3,419.4 282.0,421.3 282.8,418.8 283.5,425.2 284.2,428.9 285.0,414.7 285.7,417.9 286.4,418.0 287.2,417.1 287.9,415.2 288.6,419.8 289.4,422.6 290.1,418.3 290.8,412.6 291.6,418.8 292.3,417.4 293.1,416.1 293.8,417.3 294.5,422.5 295.3,424.9 296.0,423.3 296.7,423.1 297.5,416.9 298.2,414.5 298.9,421.9 299.7,413.2 300.4,416.6 301.1,419.9 301.9,420.1 302.6,422.8 303.3,425.6 304.1,410.2 304.8,420.7 305.6,421.8 306.3,416.2 307.0,417.0 307.8,426.8 308.5,422.6 309.2,423.9 310.0,422.5 310.7,421.9 311.4,421.6 312.2,409.9 312.9,417.4 313.6,421.6 314.4,414.8 315.1,421.7 315.8,413.2 316.6,414.0 317.3,411.3 318.1,411.7 318.8,418.0 319.5,411.6 320.3,424.8 321.0,419.9 321.7,419.9 322.5,414.9 323.2,413.4 323.9,417.9 324.7,418.4 325.4,423.7 326.1,414.9 326.9,419.5 327.6,414.7 328.3,412.5 329.1,424.5 329.8,421.7 330.6,421.6 331.3,407.7 332.0,410.6 332.8,403.4 333.5,424.2 334.2,418.1 335.0,415.7 335.7,418.9 336.4,416.3 337.2,415.8 337.9,412.4 338.6,407.8 339.4,415.6 340.1,406.9 340.8,423.9 341.6,417.6 342.3,408.2 343.1,379.2 343.8,387.8 344.5,381.3 345.3,383.1 346.0,390.3 346.7,393.8 347.5,392.1 348.2,390.0 348.9,396.7 349.7,382.4 350.4,392.3 351.1,383.3 351.9,388.5 352.6,379.2 353.3,379.3 354.1,381.3 354.8,390.3 355.6,386.0 356.3,380.0 357.0,398.6 357.8,419.3 358.5,419.6 359.2,419.4 360.0,412.8 360.7,430.4 361.4,426.5 362.2,427.2 362.9,421.0 363.6,422.1 364.4,426.8 365.1,432.3 365.8,426.5 366.6,428.0 367.3,422.4 368.1,428.8 368.8,432.0 369.5,422.8 370.3,422.5 371.0,424.8 371.7,422.2 372.5,420.7 373.2,409.4 373.9,421.8 374.7,419.7 375.4,416.9 376.1,419.5 376.9,424.7 377.6,420.0 378.3,417.6 379.1,427.7 379.8,423.8 380.6,423.5 381.3,422.7 382.0,421.6 382.8,414.3 383.5,420.1 384.2,419.2 385.0,424.8 385.7,415.3 386.4,417.3 387.2,424.3 387.9,423.5 388.6,422.7 389.4,421.6 390.1,418.6 390.8,421.4 391.6,414.9 392.3,416.3 393.1,415.5 393.8,419.7 394.5,418.4 395.3,416.0 396.0,423.4 396.7,414.5 397.5,415.7 398.2,418.0 398.9,425.2 399.7,421.7 400.4,422.7 401.1,418.3 401.9,417.8 402.6,416.8 403.3,415.2 404.1,418.4 404.8,414.1 405.6,421.9 406.3,413.9 407.0,411.3 407.8,413.5 408.5,412.1 409.2,413.0 410.0,418.9 410.7,422.2 411.4,410.7 412.2,419.3 412.9,420.1 413.6,417.7 414.4,416.8 415.1,425.5 415.8,416.2 416.6,414.7 417.3,417.8 418.1,421.8 418.8,419.4 419.5,421.7 420.3,416.7 421.0,417.6 421.7,419.6 422.5,420.3 423.2,415.2 423.9,410.2 424.7,423.0 425.4,412.3 426.1,411.6 426.9,423.0 427.6,415.3 428.3,422.0 429.1,421.0 429.8,418.1 430.6,427.1 431.3,422.0 432.0,426.3 432.8,420.9 433.5,426.5 434.2,428.7 435.0,425.7 435.7,433.0 436.4,427.4 437.2,416.1 437.9,425.2 438.6,421.5 439.4,432.4 440.1,426.6 440.8,428.6 441.6,423.6 442.3,425.9 443.0,429.1 443.8,430.5 444.5,432.5 445.3,427.6 446.0,410.7 446.7,431.5 447.5,426.5 448.2,423.1 448.9,418.2 449.7,420.9 450.4,425.4 451.1,427.4 451.9,419.4 452.6,415.1 453.3,421.1 454.1,415.9 454.8,418.2 455.5,410.4 456.3,420.8 457.0,415.0 457.8,420.5 458.5,420.2 459.2,417.0 460.0,422.8 460.7,407.4 461.4,418.1 462.2,417.7 462.9,421.4 463.6,412.9 464.4,410.4 465.1,415.8 465.8,415.0 466.6,409.1 467.3,421.4 468.0,414.4 468.8,422.7 469.5,423.9 470.3,418.4 471.0,414.4 471.7,415.6 472.5,418.9 473.2,416.2 473.9,420.4 474.7,410.8 475.4,414.8 476.1,416.7 476.9,422.9 477.6,421.5 478.3,416.6 479.1,414.8 479.8,422.2 480.5,416.2 481.3,415.6 482.0,415.7 482.8,417.8 483.5,416.1 484.2,417.7 485.0,423.0 485.7,416.9 486.4,430.6 487.2,421.9 487.9,423.2 488.6,419.0 489.4,415.3 490.1,420.5 490.8,422.0 491.6,420.4 492.3,420.1 493.0,416.9 493.8,419.8 494.5,415.0 495.3,427.3 496.0,414.4 496.7,413.9 497.5,411.7 498.2,419.6 498.9,416.6 499.7,415.7 500.4,415.2 501.1,412.2 501.9,418.6 502.6,421.1 503.3,418.1 504.1,419.3 504.8,421.5 505.5,420.8 506.3,420.3 507.0,420.7 507.8,419.2 508.5,415.6 509.2,414.5 510.0,423.0 510.7,424.1 511.4,427.0 512.2,416.6 512.9,420.7 513.6,414.6 514.4,418.3 515.1,405.7 515.8,410.9 516.6,417.5 517.3,413.9 518.0,395.9 518.8,423.8 519.5,415.7 520.3,415.2 521.0,419.3 521.7,413.8 522.5,416.0 523.2,418.7 523.9,419.2 524.7,419.5 525.4,407.8 526.1,410.6 526.9,416.2 527.6,409.7 528.3,419.4 529.1,409.1 529.8,410.0 530.5,414.1 531.3,418.4 532.0,416.3 532.8,421.7 533.5,419.4 534.2,410.2 535.0,417.2 535.7,421.3 536.4,413.7 537.2,417.5 537.9,409.6 538.6,414.2 539.4,418.2 540.1,414.2 540.8,415.2 541.6,414.2 542.3,403.1 543.0,405.3 543.8,399.1 544.5,391.4 545.3,394.1 546.0,400.0 546.7,410.9 547.5,407.7 548.2,406.0 548.9,416.4 549.7,427.2 550.4,426.6 551.1,423.7 551.9,427.6 552.6,428.5 553.3,432.6 554.1,423.4 554.8,425.3 555.5,427.6 556.3,425.8 557.0,427.4 557.8,424.3 558.5,423.6 559.2,420.7 560.0,419.8 560.7,428.0 561.4,419.4 562.2,423.4 562.9,424.6 563.6,418.9 564.4,424.8 565.1,421.0 565.8,426.8 566.6,425.5 567.3,421.5 568.0,418.6 568.8,417.3 569.5,428.8 570.3,419.8 571.0,418.6 571.7,419.4 572.5,415.6 573.2,416.9 573.9,425.8 574.7,416.5 575.4,418.4 576.1,416.1 576.9,421.1 577.6,430.6 578.3,415.7 579.1,408.4 579.8,411.9 580.5,424.4 581.3,416.8 582.0,416.2 582.7,413.9 583.5,420.5 584.2,423.6 585.0,419.2 585.7,412.6 586.4,423.3 587.2,401.7 587.9,422.7 588.6,425.2 589.4,421.5 590.1,411.8 590.8,420.6 591.6,414.7 592.3,421.5 593.0,412.9 593.8,418.3 594.5,420.8 595.2,425.8 596.0,421.2 596.7,396.8 597.5,411.0 598.2,413.9 598.9,412.2 599.7,412.0 600.4,412.0 601.1,419.3 601.9,414.0 602.6,418.9 603.3,411.1 604.1,415.2 604.8,411.0 605.5,414.8 606.3,418.0 607.0,416.9 607.7,413.6 608.5,406.6 609.2,417.6 610.0,417.2 610.7,415.4 611.4,417.5 612.2,410.3 612.9,412.5 613.6,415.8 614.4,411.1 615.1,413.9 615.8,412.3 616.6,414.3 617.3,412.4 618.0,412.8 618.8,412.4 619.5,418.5 620.2,414.7 621.0,415.8 621.7,410.5 622.5,415.2 623.2,413.2 623.9,413.1 624.7,414.7 625.4,417.9 626.1,418.4 626.9,413.7 627.6,415.2 628.3,408.2 629.1,416.4 629.8,414.8 630.5,421.7 631.3,416.2 632.0,412.1 632.7,416.4 633.5,404.3 634.2,413.3 635.0,416.8 635.7,417.1 636.4,413.2 637.2,419.9 637.9,414.3 638.6,411.7 639.4,421.2 640.1,414.6 640.8,410.9 641.6,411.1 642.3,411.5 643.0,413.7 643.8,418.8 644.5,414.0 645.2,417.7 646.0,419.5 646.7,412.0 647.5,404.6 648.2,408.2 648.9,414.3 649.7,415.6 650.4,422.9 651.1,415.1 651.9,419.0 652.6,419.3 653.3,414.2 654.1,413.8 654.8,423.3 655.5,422.9 656.3,421.7 657.0,416.5 657.7,414.0 658.5,424.0 659.2,414.5 660.0,421.2 660.7,422.0 661.4,414.0 662.2,406.8 662.9,417.5 663.6,419.9 664.4,427.4 665.1,426.9 665.8,419.9 666.6,423.5 667.3,405.8 668.0,416.1 668.8,423.9 669.5,428.9 670.2,428.0 671.0,425.2 671.7,425.3 672.5,429.2 673.2,432.1 673.9,430.0 674.7,428.0 675.4,413.3 676.1,422.7 676.9,414.5 677.6,424.1 678.3,429.2 679.1,428.1 679.8,418.4 680.5,424.1 681.3,424.9 682.0,417.5 682.7,419.3 683.5,423.7 684.2,409.5 685.0,414.4 685.7,423.2 686.4,418.0 687.2,407.0 687.9,426.8 688.6,413.5 689.4,415.5 690.1,422.9 690.8,422.9 691.6,418.2 692.3,420.1 693.0,412.3 693.8,416.5 694.5,416.3 695.2,424.4 696.0,414.5 696.7,413.3 697.5,413.2 698.2,418.1 698.9,410.8 699.7,419.2 700.4,413.4 701.1,416.9 701.9,424.6 702.6,425.5 703.3,423.5 704.1,408.9 704.8,412.2 705.5,408.1 706.3,418.6 707.0,420.5 707.7,419.0 708.5,419.6 709.2,419.4 710.0,425.7 710.7,421.9 711.4,412.1 712.2,414.1 712.9,409.2 713.6,415.6 714.4,422.4 715.1,410.0 715.8,406.7 716.6,401.0 717.3,400.6 718.0,402.8 718.8,395.6 719.5,388.0 720.2,396.0 721.0,389.3 721.7,392.5 722.5,399.3 723.2,406.2 723.9,398.3 724.7,403.7 725.4,418.6 726.1,423.4 726.9,415.1 727.6,420.1 728.3,414.9 729.1,420.2 729.8,419.4 730.5,423.9 731.3,428.9 732.0,427.1 732.7,424.8 733.5,422.4 734.2,414.1 734.9,414.2 735.7,423.6 736.4,425.1 737.2,434.3 737.9,424.8 738.6,427.7 739.4,430.9 740.1,423.0 740.8,431.0 741.6,430.8 742.3,423.5 743.0,421.3 743.8,429.8 744.5,435.7 745.2,430.2 746.0,433.4 746.7,429.6 747.4,434.6 748.2,427.4 748.9,426.7 749.7,422.5 750.4,425.1 751.1,426.1 751.9,427.6 752.6,425.8 753.3,427.5 754.1,426.9 754.8,435.1 755.5,430.3 756.3,430.5 757.0,429.5 757.7,420.3 758.5,427.2 759.2,417.7 759.9,431.7 760.7,419.8 761.4,432.3 762.2,429.9 762.9,421.3 763.6,420.3 764.4,435.5 765.1,420.1 765.8,417.4 766.6,429.7 767.3,428.7 768.0,429.0 768.8,425.2 769.5,417.2 770.2,430.2 771.0,420.8 771.7,432.2 772.4,421.1 773.2,426.1 773.9,428.1 774.7,412.6 775.4,416.5 776.1,416.9 776.9,421.0 777.6,421.3 778.3,415.7 779.1,402.8 779.8,401.5 780.5,410.3 781.3,402.1 782.0,405.4 782.7,405.2 783.5,409.9 784.2,408.9 784.9,414.4 785.7,412.6 786.4,409.6 787.2,416.3 787.9,415.2 788.6,410.9 789.4,408.0 790.1,413.8 790.8,411.8 791.6,409.9 792.3,412.2 793.0,405.4 793.8,412.9 794.5,413.2 795.2,414.6 796.0,417.4 796.7,414.5 797.4,411.9 798.2,412.8 798.9,400.2 799.7,415.8 800.4,416.6 801.1,413.2 801.9,411.1 802.6,414.2 803.3,418.1 804.1,417.4 804.8,418.5" fill="none" stroke="#c4900e" stroke-width="0.8" stroke-linejoin="round"/>
<polyline points="208.5,459.2 209.2,457.7 210.0,461.6 210.7,459.3 211.4,461.2 212.2,460.1 212.9,459.3 213.6,457.2 214.4,456.4 215.1,461.0 215.9,459.8 216.6,462.1 217.3,460.3 218.1,457.8 218.8,459.9 219.5,458.3 220.3,457.2 221.0,457.4 221.7,457.2 222.5,457.9 223.2,459.9 223.9,454.2 224.7,455.2 225.4,458.6 226.1,456.5 226.9,458.0 227.6,457.3 228.4,458.7 229.1,458.3 229.8,456.7 230.6,457.3 231.3,457.8 232.0,457.5 232.8,457.9 233.5,457.7 234.2,456.5 235.0,459.0 235.7,458.8 236.4,458.1 237.2,458.8 237.9,455.5 238.6,456.5 239.4,455.8 240.1,456.1 240.9,458.9 241.6,458.1 242.3,458.2 243.1,458.3 243.8,459.3 244.5,457.5 245.3,458.0 246.0,457.4 246.7,458.4 247.5,458.2 248.2,456.8 248.9,457.5 249.7,457.1 250.4,456.2 251.1,456.1 251.9,457.2 252.6,458.1 253.4,456.6 254.1,457.8 254.8,457.2 255.6,455.7 256.3,457.3 257.0,459.4 257.8,459.5 258.5,458.8 259.2,456.1 260.0,456.9 260.7,458.0 261.4,457.6 262.2,459.7 262.9,457.2 263.6,458.3 264.4,455.5 265.1,454.6 265.9,458.5 266.6,457.9 267.3,458.8 268.1,456.8 268.8,459.3 269.5,457.7 270.3,457.2 271.0,458.6 271.7,459.6 272.5,456.5 273.2,458.4 273.9,456.6 274.7,456.9 275.4,457.5 276.1,457.6 276.9,457.1 277.6,457.9 278.4,459.4 279.1,460.9 279.8,459.4 280.6,459.0 281.3,457.5 282.0,458.2 282.8,458.3 283.5,459.7 284.2,459.5 285.0,456.7 285.7,458.0 286.4,457.9 287.2,457.3 287.9,456.5 288.6,457.5 289.4,458.8 290.1,457.7 290.8,455.7 291.6,458.1 292.3,456.9 293.1,457.0 293.8,457.4 294.5,458.2 295.3,459.0 296.0,459.1 296.7,459.2 297.5,457.3 298.2,456.6 298.9,458.1 299.7,457.3 300.4,456.8 301.1,457.8 301.9,457.6 302.6,458.4 303.3,459.3 304.1,455.6 304.8,458.1 305.6,458.7 306.3,457.2 307.0,457.3 307.8,459.8 308.5,459.1 309.2,459.4 310.0,458.5 310.7,458.3 311.4,458.4 312.2,456.0 312.9,457.2 313.6,458.5 314.4,457.5 315.1,457.9 315.8,456.9 316.6,455.9 317.3,455.8 318.1,456.2 318.8,458.3 319.5,456.3 320.3,458.7 321.0,457.6 321.7,457.9 322.5,457.4 323.2,456.6 323.9,457.6 324.7,457.5 325.4,458.9 326.1,456.7 326.9,458.4 327.6,457.0 328.3,455.8 329.1,459.6 329.8,458.1 330.6,457.7 331.3,454.9 332.0,456.3 332.8,453.8 333.5,459.6 334.2,457.5 335.0,457.1 335.7,457.4 336.4,456.8 337.2,457.0 337.9,455.7 338.6,454.9 339.4,457.1 340.1,455.3 340.8,458.2 341.6,457.6 342.3,455.1 343.1,448.5 343.8,450.6 344.5,449.5 345.3,449.4 346.0,451.1 346.7,451.6 347.5,451.6 348.2,451.5 348.9,452.9 349.7,449.2 350.4,451.4 351.1,449.2 351.9,450.8 352.6,448.3 353.3,448.4 354.1,448.4 354.8,451.1 355.6,450.0 356.3,448.5 357.0,452.6 357.8,458.2 358.5,458.1 359.2,458.0 360.0,457.0 360.7,460.1 361.4,459.2 362.2,459.7 362.9,457.2 363.6,458.1 364.4,459.0 365.1,460.4 365.8,459.3 366.6,460.4 367.3,458.1 368.1,460.0 368.8,461.2 369.5,458.7 370.3,458.4 371.0,458.8 371.7,458.5 372.5,458.4 373.2,455.3 373.9,458.7 374.7,458.0 375.4,457.1 376.1,458.4 376.9,459.0 377.6,458.7 378.3,457.8 379.1,460.2 379.8,458.9 380.6,458.6 381.3,458.7 382.0,458.1 382.8,456.7 383.5,458.1 384.2,457.7 385.0,459.2 385.7,456.9 386.4,457.1 387.2,459.2 387.9,458.5 388.6,459.0 389.4,458.5 390.1,458.3 390.8,458.5 391.6,456.3 392.3,457.1 393.1,456.6 393.8,458.4 394.5,458.0 395.3,457.0 396.0,458.6 396.7,456.5 397.5,457.5 398.2,457.4 398.9,459.3 399.7,458.4 400.4,458.5 401.1,457.7 401.9,458.1 402.6,457.6 403.3,457.4 404.1,458.1 404.8,456.7 405.6,458.1 406.3,456.8 407.0,456.2 407.8,456.9 408.5,456.7 409.2,456.4 410.0,457.9 410.7,458.6 411.4,456.2 412.2,457.7 412.9,458.4 413.6,457.3 414.4,457.5 415.1,459.1 415.8,457.4 416.6,456.7 417.3,457.4 418.1,458.5 418.8,457.4 419.5,458.4 420.3,457.5 421.0,457.3 421.7,458.2 422.5,458.3 423.2,456.9 423.9,455.7 424.7,458.2 425.4,456.8 426.1,456.1 426.9,458.4 427.6,457.0 428.3,458.4 429.1,457.8 429.8,458.0 430.6,459.7 431.3,458.2 432.0,459.7 432.8,458.8 433.5,459.9 434.2,460.0 435.0,459.3 435.7,460.5 436.4,459.3 437.2,457.6 437.9,458.9 438.6,458.1 439.4,460.4 440.1,459.6 440.8,460.2 441.6,458.8 442.3,458.9 443.0,460.0 443.8,460.0 444.5,460.7 445.3,460.0 446.0,456.2 446.7,460.1 447.5,460.0 448.2,458.9 448.9,457.7 449.7,458.5 450.4,459.5 451.1,459.8 451.9,457.1 452.6,456.9 453.3,458.5 454.1,457.0 454.8,457.3 455.5,456.0 456.3,458.3 457.0,457.4 457.8,457.9 458.5,457.9 459.2,456.8 460.0,459.1 460.7,454.4 461.4,457.3 462.2,457.6 462.9,458.5 463.6,456.5 464.4,456.2 465.1,456.8 465.8,457.0 466.6,455.7 467.3,458.2 468.0,456.7 468.8,458.8 469.5,459.0 470.3,457.8 471.0,456.3 471.7,456.7 472.5,458.0 473.2,457.2 473.9,457.7 474.7,456.0 475.4,456.2 476.1,457.1 476.9,458.5 477.6,459.0 478.3,457.0 479.1,456.7 479.8,458.4 480.5,457.0 481.3,456.8 482.0,457.2 482.8,457.2 483.5,457.1 484.2,457.8 485.0,459.1 485.7,457.3 486.4,460.4 487.2,459.2 487.9,459.5 488.6,457.5 489.4,456.9 490.1,457.2 490.8,459.0 491.6,458.2 492.3,458.3 493.0,457.1 493.8,457.5 494.5,456.3 495.3,460.1 496.0,456.3 496.7,457.0 497.5,456.0 498.2,457.9 498.9,457.0 499.7,457.3 500.4,456.5 501.1,456.2 501.9,457.7 502.6,458.4 503.3,457.9 504.1,457.6 504.8,458.3 505.5,458.1 506.3,457.5 507.0,458.5 507.8,457.9 508.5,457.0 509.2,456.5 510.0,458.8 510.7,458.7 511.4,459.5 512.2,457.8 512.9,458.4 513.6,457.4 514.4,457.7 515.1,454.8 515.8,455.7 516.6,457.4 517.3,456.6 518.0,452.0 518.8,458.7 519.5,457.4 520.3,457.1 521.0,457.8 521.7,456.0 522.5,457.2 523.2,457.8 523.9,457.8 524.7,457.7 525.4,455.2 526.1,455.7 526.9,457.3 527.6,455.8 528.3,458.1 529.1,455.3 529.8,455.9 530.5,456.5 531.3,457.5 532.0,456.8 532.8,459.3 533.5,458.2 534.2,456.1 535.0,457.4 535.7,458.1 536.4,455.7 537.2,457.0 537.9,455.2 538.6,456.5 539.4,457.7 540.1,456.5 540.8,457.6 541.6,456.4 542.3,454.1 543.0,454.4 543.8,453.5 544.5,451.7 545.3,452.2 546.0,453.3 546.7,455.8 547.5,455.3 548.2,454.6 548.9,457.0 549.7,460.1 550.4,459.6 551.1,459.4 551.9,460.0 552.6,459.7 553.3,461.2 554.1,458.2 554.8,459.1 555.5,459.5 556.3,459.4 557.0,459.5 557.8,458.7 558.5,458.8 559.2,458.4 560.0,458.2 560.7,459.3 561.4,457.9 562.2,459.0 562.9,459.3 563.6,458.3 564.4,459.3 565.1,458.2 565.8,459.8 566.6,459.6 567.3,458.3 568.0,457.6 568.8,457.5 569.5,460.0 570.3,458.3 571.0,457.4 571.7,458.2 572.5,457.1 573.2,457.3 573.9,459.5 574.7,457.6 575.4,457.0 576.1,456.6 576.9,458.8 577.6,460.5 578.3,457.4 579.1,455.2 579.8,456.5 580.5,458.9 581.3,457.1 582.0,456.6 582.7,456.2 583.5,458.3 584.2,458.6 585.0,458.0 585.7,456.3 586.4,459.0 587.2,454.3 587.9,458.5 588.6,459.9 589.4,458.5 590.1,455.9 590.8,458.1 591.6,457.3 592.3,458.6 593.0,456.1 593.8,457.3 594.5,457.7 595.2,460.0 596.0,458.2 596.7,452.7 597.5,455.7 598.2,457.1 598.9,456.3 599.7,455.9 600.4,456.4 601.1,458.0 601.9,456.9 602.6,457.4 603.3,456.4 604.1,457.2 604.8,456.0 605.5,456.9 606.3,456.9 607.0,457.2 607.7,456.8 608.5,454.7 609.2,457.4 610.0,457.3 610.7,457.0 611.4,457.3 612.2,456.1 612.9,456.7 613.6,457.2 614.4,456.3 615.1,456.4 615.8,455.6 616.6,456.3 617.3,456.1 618.0,456.2 618.8,456.5 619.5,458.1 620.2,456.6 621.0,457.5 621.7,455.7 622.5,457.0 623.2,456.2 623.9,456.4 624.7,456.7 625.4,457.7 626.1,458.2 626.9,456.7 627.6,456.7 628.3,454.9 629.1,456.7 629.8,457.1 630.5,458.7 631.3,456.9 632.0,456.3 632.7,456.4 633.5,454.2 634.2,456.9 635.0,457.5 635.7,456.9 636.4,457.0 637.2,458.0 637.9,457.1 638.6,455.6 639.4,458.5 640.1,457.1 640.8,456.5 641.6,456.2 642.3,456.9 643.0,456.7 643.8,457.0 644.5,456.6 645.2,457.6 646.0,458.3 646.7,456.0 647.5,454.6 648.2,455.5 648.9,456.2 649.7,456.9 650.4,459.0 651.1,456.4 651.9,457.8 652.6,457.7 653.3,456.6 654.1,456.2 654.8,458.6 655.5,458.8 656.3,458.2 657.0,457.3 657.7,456.6 658.5,458.4 659.2,457.1 660.0,458.7 660.7,458.6 661.4,456.8 662.2,454.5 662.9,458.0 663.6,457.3 664.4,459.3 665.1,459.8 665.8,457.9 666.6,459.0 667.3,454.5 668.0,456.9 668.8,458.7 669.5,459.9 670.2,459.3 671.0,459.3 671.7,459.1 672.5,460.3 673.2,460.9 673.9,460.3 674.7,459.9 675.4,456.4 676.1,458.9 676.9,456.8 677.6,459.2 678.3,460.6 679.1,460.2 679.8,457.8 680.5,459.0 681.3,459.7 682.0,457.5 682.7,458.2 683.5,459.2 684.2,455.5 685.0,456.4 685.7,458.7 686.4,457.7 687.2,455.1 687.9,459.2 688.6,457.0 689.4,456.6 690.1,459.2 690.8,458.9 691.6,457.6 692.3,458.1 693.0,455.7 693.8,457.1 694.5,457.2 695.2,458.8 696.0,456.7 696.7,456.7 697.5,456.1 698.2,457.1 698.9,455.5 699.7,458.2 700.4,455.9 701.1,457.4 701.9,458.9 702.6,458.9 703.3,458.1 704.1,456.0 704.8,456.5 705.5,454.8 706.3,457.5 707.0,458.2 707.7,458.7 708.5,457.8 709.2,457.9 710.0,460.2 710.7,457.6 711.4,457.0 712.2,456.8 712.9,455.5 713.6,456.9 714.4,458.4 715.1,455.8 715.8,455.2 716.6,453.7 717.3,454.2 718.0,454.4 718.8,451.7 719.5,450.7 720.2,452.4 721.0,450.2 721.7,451.2 722.5,453.1 723.2,454.6 723.9,453.0 724.7,454.5 725.4,457.4 726.1,458.8 726.9,456.4 727.6,458.1 728.3,456.9 729.1,458.0 729.8,458.0 730.5,459.0 731.3,460.4 732.0,459.6 732.7,459.1 733.5,458.0 734.2,456.7 734.9,457.2 735.7,458.7 736.4,458.5 737.2,461.5 737.9,459.4 738.6,459.9 739.4,461.5 740.1,458.8 740.8,460.7 741.6,461.1 742.3,458.7 743.0,458.6 743.8,460.9 744.5,462.0 745.2,460.2 746.0,460.6 746.7,459.9 747.4,461.4 748.2,459.9 748.9,459.7 749.7,458.3 750.4,459.4 751.1,459.3 751.9,459.5 752.6,459.7 753.3,460.0 754.1,459.5 754.8,461.6 755.5,460.5 756.3,460.7 757.0,460.3 757.7,457.5 758.5,459.3 759.2,458.0 759.9,460.8 760.7,458.0 761.4,460.9 762.2,460.8 762.9,458.4 763.6,458.1 764.4,461.9 765.1,458.0 765.8,458.2 766.6,460.8 767.3,460.0 768.0,460.0 768.8,459.3 769.5,457.5 770.2,460.4 771.0,457.9 771.7,460.6 772.4,458.3 773.2,459.6 773.9,459.6 774.7,456.1 775.4,456.9 776.1,457.4 776.9,458.5 777.6,458.3 778.3,457.2 779.1,453.6 779.8,453.4 780.5,456.5 781.3,453.6 782.0,454.2 782.7,454.2 783.5,455.8 784.2,455.7 784.9,456.4 785.7,456.0 786.4,455.6 787.2,457.5 787.9,457.4 788.6,455.8 789.4,455.5 790.1,456.8 790.8,456.0 791.6,455.3 792.3,456.9 793.0,454.8 793.8,456.0 794.5,456.5 795.2,456.9 796.0,457.2 796.7,457.1 797.4,456.5 798.2,456.3 798.9,452.9 799.7,456.7 800.4,457.2 801.1,456.1 801.9,456.1 802.6,457.1 803.3,458.1 804.1,457.3 804.8,457.4" fill="none" stroke="#cc10ac" stroke-width="0.7" stroke-linejoin="round"/>
<line x1="208.5" x2="208.5" y1="81.30" y2="182.10" class="ax"/>
<line x1="208.0" x2="805.3" y1="181.60" y2="181.60" class="ax"/>
<line x1="203.2" x2="208.5" y1="181.60" y2="181.60" class="ax"/>
<line x1="205.5" x2="208.5" y1="174.95" y2="174.95" class="ax"/>
<line x1="205.5" x2="208.5" y1="168.29" y2="168.29" class="ax"/>
<line x1="203.2" x2="208.5" y1="161.64" y2="161.64" class="ax"/>
<line x1="205.5" x2="208.5" y1="154.99" y2="154.99" class="ax"/>
<line x1="205.5" x2="208.5" y1="148.33" y2="148.33" class="ax"/>
<line x1="203.2" x2="208.5" y1="141.68" y2="141.68" class="ax"/>
<line x1="205.5" x2="208.5" y1="135.03" y2="135.03" class="ax"/>
<line x1="205.5" x2="208.5" y1="128.37" y2="128.37" class="ax"/>
<line x1="203.2" x2="208.5" y1="121.72" y2="121.72" class="ax"/>
<line x1="205.5" x2="208.5" y1="115.07" y2="115.07" class="ax"/>
<line x1="205.5" x2="208.5" y1="108.41" y2="108.41" class="ax"/>
<line x1="203.2" x2="208.5" y1="101.76" y2="101.76" class="ax"/>
<line x1="205.5" x2="208.5" y1="95.11" y2="95.11" class="ax"/>
<line x1="205.5" x2="208.5" y1="88.45" y2="88.45" class="ax"/>
<line x1="203.2" x2="208.5" y1="81.80" y2="81.80" class="ax"/>
<line x1="208.50" x2="208.50" y1="181.6" y2="186.1" class="ax"/>
<line x1="238.31" x2="238.31" y1="181.6" y2="184.6" class="ax"/>
<line x1="268.13" x2="268.13" y1="181.6" y2="186.1" class="ax"/>
<line x1="297.94" x2="297.94" y1="181.6" y2="184.6" class="ax"/>
<line x1="327.76" x2="327.76" y1="181.6" y2="186.1" class="ax"/>
<line x1="357.57" x2="357.57" y1="181.6" y2="184.6" class="ax"/>
<line x1="387.39" x2="387.39" y1="181.6" y2="186.1" class="ax"/>
<line x1="417.20" x2="417.20" y1="181.6" y2="184.6" class="ax"/>
<line x1="447.02" x2="447.02" y1="181.6" y2="186.1" class="ax"/>
<line x1="476.83" x2="476.83" y1="181.6" y2="184.6" class="ax"/>
<line x1="506.65" x2="506.65" y1="181.6" y2="186.1" class="ax"/>
<line x1="536.46" x2="536.46" y1="181.6" y2="184.6" class="ax"/>
<line x1="566.28" x2="566.28" y1="181.6" y2="186.1" class="ax"/>
<line x1="596.10" x2="596.10" y1="181.6" y2="184.6" class="ax"/>
<line x1="625.91" x2="625.91" y1="181.6" y2="186.1" class="ax"/>
<line x1="655.72" x2="655.72" y1="181.6" y2="184.6" class="ax"/>
<line x1="685.54" x2="685.54" y1="181.6" y2="186.1" class="ax"/>
<line x1="715.36" x2="715.36" y1="181.6" y2="184.6" class="ax"/>
<line x1="745.17" x2="745.17" y1="181.6" y2="186.1" class="ax"/>
<line x1="774.98" x2="774.98" y1="181.6" y2="184.6" class="ax"/>
<line x1="804.80" x2="804.80" y1="181.6" y2="186.1" class="ax"/>
<line x1="208.5" x2="208.5" y1="225.90" y2="326.70" class="ax"/>
<line x1="208.0" x2="805.3" y1="326.20" y2="326.20" class="ax"/>
<line x1="203.2" x2="208.5" y1="326.20" y2="326.20" class="ax"/>
<line x1="205.5" x2="208.5" y1="316.22" y2="316.22" class="ax"/>
<line x1="203.2" x2="208.5" y1="306.24" y2="306.24" class="ax"/>
<line x1="205.5" x2="208.5" y1="296.26" y2="296.26" class="ax"/>
<line x1="203.2" x2="208.5" y1="286.28" y2="286.28" class="ax"/>
<line x1="205.5" x2="208.5" y1="276.30" y2="276.30" class="ax"/>
<line x1="203.2" x2="208.5" y1="266.32" y2="266.32" class="ax"/>
<line x1="205.5" x2="208.5" y1="256.34" y2="256.34" class="ax"/>
<line x1="203.2" x2="208.5" y1="246.36" y2="246.36" class="ax"/>
<line x1="205.5" x2="208.5" y1="236.38" y2="236.38" class="ax"/>
<line x1="203.2" x2="208.5" y1="226.40" y2="226.40" class="ax"/>
<line x1="208.50" x2="208.50" y1="326.2" y2="330.7" class="ax"/>
<line x1="238.31" x2="238.31" y1="326.2" y2="329.2" class="ax"/>
<line x1="268.13" x2="268.13" y1="326.2" y2="330.7" class="ax"/>
<line x1="297.94" x2="297.94" y1="326.2" y2="329.2" class="ax"/>
<line x1="327.76" x2="327.76" y1="326.2" y2="330.7" class="ax"/>
<line x1="357.57" x2="357.57" y1="326.2" y2="329.2" class="ax"/>
<line x1="387.39" x2="387.39" y1="326.2" y2="330.7" class="ax"/>
<line x1="417.20" x2="417.20" y1="326.2" y2="329.2" class="ax"/>
<line x1="447.02" x2="447.02" y1="326.2" y2="330.7" class="ax"/>
<line x1="476.83" x2="476.83" y1="326.2" y2="329.2" class="ax"/>
<line x1="506.65" x2="506.65" y1="326.2" y2="330.7" class="ax"/>
<line x1="536.46" x2="536.46" y1="326.2" y2="329.2" class="ax"/>
<line x1="566.28" x2="566.28" y1="326.2" y2="330.7" class="ax"/>
<line x1="596.10" x2="596.10" y1="326.2" y2="329.2" class="ax"/>
<line x1="625.91" x2="625.91" y1="326.2" y2="330.7" class="ax"/>
<line x1="655.72" x2="655.72" y1="326.2" y2="329.2" class="ax"/>
<line x1="685.54" x2="685.54" y1="326.2" y2="330.7" class="ax"/>
<line x1="715.36" x2="715.36" y1="326.2" y2="329.2" class="ax"/>
<line x1="745.17" x2="745.17" y1="326.2" y2="330.7" class="ax"/>
<line x1="774.98" x2="774.98" y1="326.2" y2="329.2" class="ax"/>
<line x1="804.80" x2="804.80" y1="326.2" y2="330.7" class="ax"/>
<line x1="208.5" x2="208.5" y1="370.10" y2="470.20" class="ax"/>
<line x1="208.0" x2="805.3" y1="469.70" y2="469.70" class="ax"/>
<line x1="203.2" x2="208.5" y1="469.70" y2="469.70" class="ax"/>
<line x1="205.5" x2="208.5" y1="463.09" y2="463.09" class="ax"/>
<line x1="205.5" x2="208.5" y1="456.49" y2="456.49" class="ax"/>
<line x1="203.2" x2="208.5" y1="449.88" y2="449.88" class="ax"/>
<line x1="205.5" x2="208.5" y1="443.27" y2="443.27" class="ax"/>
<line x1="205.5" x2="208.5" y1="436.67" y2="436.67" class="ax"/>
<line x1="203.2" x2="208.5" y1="430.06" y2="430.06" class="ax"/>
<line x1="205.5" x2="208.5" y1="423.45" y2="423.45" class="ax"/>
<line x1="205.5" x2="208.5" y1="416.85" y2="416.85" class="ax"/>
<line x1="203.2" x2="208.5" y1="410.24" y2="410.24" class="ax"/>
<line x1="205.5" x2="208.5" y1="403.63" y2="403.63" class="ax"/>
<line x1="205.5" x2="208.5" y1="397.03" y2="397.03" class="ax"/>
<line x1="203.2" x2="208.5" y1="390.42" y2="390.42" class="ax"/>
<line x1="205.5" x2="208.5" y1="383.81" y2="383.81" class="ax"/>
<line x1="205.5" x2="208.5" y1="377.21" y2="377.21" class="ax"/>
<line x1="203.2" x2="208.5" y1="370.60" y2="370.60" class="ax"/>
<line x1="208.50" x2="208.50" y1="469.7" y2="474.2" class="ax"/>
<line x1="238.31" x2="238.31" y1="469.7" y2="472.7" class="ax"/>
<line x1="268.13" x2="268.13" y1="469.7" y2="474.2" class="ax"/>
<line x1="297.94" x2="297.94" y1="469.7" y2="472.7" class="ax"/>
<line x1="327.76" x2="327.76" y1="469.7" y2="474.2" class="ax"/>
<line x1="357.57" x2="357.57" y1="469.7" y2="472.7" class="ax"/>
<line x1="387.39" x2="387.39" y1="469.7" y2="474.2" class="ax"/>
<line x1="417.20" x2="417.20" y1="469.7" y2="472.7" class="ax"/>
<line x1="447.02" x2="447.02" y1="469.7" y2="474.2" class="ax"/>
<line x1="476.83" x2="476.83" y1="469.7" y2="472.7" class="ax"/>
<line x1="506.65" x2="506.65" y1="469.7" y2="474.2" class="ax"/>
<line x1="536.46" x2="536.46" y1="469.7" y2="472.7" class="ax"/>
<line x1="566.28" x2="566.28" y1="469.7" y2="474.2" class="ax"/>
<line x1="596.10" x2="596.10" y1="469.7" y2="472.7" class="ax"/>
<line x1="625.91" x2="625.91" y1="469.7" y2="474.2" class="ax"/>
<line x1="655.72" x2="655.72" y1="469.7" y2="472.7" class="ax"/>
<line x1="685.54" x2="685.54" y1="469.7" y2="474.2" class="ax"/>
<line x1="715.36" x2="715.36" y1="469.7" y2="472.7" class="ax"/>
<line x1="745.17" x2="745.17" y1="469.7" y2="474.2" class="ax"/>
<line x1="774.98" x2="774.98" y1="469.7" y2="472.7" class="ax"/>
<line x1="804.80" x2="804.80" y1="469.7" y2="474.2" class="ax"/>

<!-- slider -->
<rect x="208" y="505.7" width="597" height="2.7" fill="#7d8bd9"/>
<rect x="201.6" y="503" width="13.8" height="8" rx="2.6" fill="#808080"/>
<rect x="798.2" y="503" width="13.8" height="8" rx="2.6" fill="#808080"/>

<!-- CJK text -->
<text class="cjk" x="27.4" y="203.87" font-size="7.5" font-weight="500" fill="#2b2b2b" stroke="#2b2b2b" stroke-width=".2">高精度采样</text>
<text class="cjk" x="27.4" y="226.87" font-size="7.5" font-weight="500" fill="#2b2b2b" stroke="#2b2b2b" stroke-width=".2">离线模式</text>
<text class="cjk" x="19.6" y="255.87" font-size="7.5" fill="#8a8a8a">默认不指定应用</text>
<text class="cjk" x="19.6" y="278.47" font-size="7.5" fill="#8a8a8a">默认主进程</text>
<text class="cjk" x="94.35" y="441.87" font-size="7.5" font-weight="500" fill="#2b2b2b" stroke="#2b2b2b" stroke-width=".2">开始</text>
<text class="cjk" x="94.35" y="464.37" font-size="7.5" font-weight="500" fill="#2b2b2b" stroke="#2b2b2b" stroke-width=".2">暂停</text>
<text class="cjk" x="86.8" y="486.77" font-size="7.5" font-weight="500" fill="#2b2b2b" stroke="#2b2b2b" stroke-width=".2">保存数据</text>
<text x="59.9" y="12" font-size="7.1" font-weight="500" fill="#1a1a1a" style="font-family:'Liberation Sans','Noto Sans CJK SC',sans-serif">内测版</text>

<!-- ICONS -->
<!-- desktop fragments behind window edges -->
<g>
<ellipse cx="1.6" cy="4.9" rx="2.4" ry="2.3" fill="#a9c9e8"/><circle cx="2.9" cy="4.9" r="1.3" fill="#0b2c68"/>
<path d="M.2 24.2H1.2V29H.2ZM2.4 25V27.8Q2.4 28.9 3.4 28.9Q4.4 28.9 4.4 27.8V25" fill="none" stroke="#cfd9ea" stroke-width=".8"/>
<path d="M887 24.5L889.6 24.5M888 23V29M886.6 27L889.8 26" stroke="#cfd9ea" stroke-width=".8" fill="none"/>
</g>
<!-- app icon -->
<g>
<path d="M9.6 6.4 Q11 4.6 13 5 Q14.4 4.6 14.8 5.6 Q12.6 5.6 11.6 6.6 Q10.4 6.2 9.6 6.4Z" fill="#bdeef0"/>
<rect x="9.3" y="9" width="5.2" height="2.4" rx=".6" fill="#2590e2"/>
<path d="M10 12 Q12 10.9 14.2 11.8 L14 13.3 Q11.6 13.9 10 13Z" fill="#86696a"/>
<rect x="14.3" y="11.2" width="4.9" height="2.3" fill="#92d9f8"/>
<path d="M15.6 4.3 L17.8 4.3 L19.2 8 L19.4 11 Q17 12.2 14 11.2 L14.4 8.4Z" fill="#4a4218"/>
<path d="M15.9 4.9 L17.5 4.9 L18.3 8.6 L15.3 8.8Z" fill="#b3a552"/>
<path d="M14 10 Q16.6 11 19.4 10 L19.3 11.3 Q16.6 12.3 14 11.3Z" fill="#33290e"/>
</g>
<!-- window controls -->
<g stroke="#1c1c1c" stroke-width=".85" fill="none">
<path d="M815.6 9.1H822"/>
<rect x="842.2" y="6.4" width="5.5" height="5.3"/>
<path d="M869.4 6.3L875 11.9M875 6.3L869.4 11.9"/>
</g>
<!-- toolbar: auto-rotate -->
<circle cx="179.1" cy="37.7" r="3.55" fill="none" stroke="#4a5dc1" stroke-width="1" stroke-dasharray="9.4 1.75" stroke-dashoffset="-2"/>
<path d="M179.1 35.8L180.7 39.4H177.5Z" fill="#3c50ba"/>
<!-- toolbar: image -->
<rect x="195.2" y="34.9" width="7.1" height="5.6" rx="1.1" fill="none" stroke="#4d4d4d" stroke-width="1"/>
<path d="M196.2 39.8L198.2 37.4L199.4 38.6L200.4 37.8L201.6 39.8Z" fill="#555"/>
<circle cx="197.1" cy="36.7" r=".65" fill="#444"/>
<!-- toolbar: bookmark -->
<path d="M810.7 34.3H816V41L813.35 39.1L810.7 41Z M810.7 36.3H816" fill="none" stroke="#4257bc" stroke-width=".95" stroke-linejoin="round"/>
<!-- toolbar: hand -->
<g>
<path d="M828.3 37.4Q829 36.8 829.5 37.6L830 38.2V36.2M834.1 36.4Q834.8 38.8 833.3 40Q831.5 41 829.9 40Q828.9 39.3 828.3 37.4" fill="none" stroke="#222" stroke-width=".95" stroke-linejoin="round"/>
<path d="M829.4 37.2V35.5Q829.8 34.6 830.5 35Q831 34.2 831.8 34.7Q832.6 34.2 833.2 34.9Q834.3 34.9 834.5 36.1V37.3Q832 35.9 829.4 37.2Z" fill="#1e1e1e"/>
</g>
<!-- toolbar: scissors -->
<g stroke="#4257bc" stroke-width=".95" fill="none">
<path d="M844.7 35.1L850.2 39.4M851.1 35.1L845.6 39.4"/>
<circle cx="845.2" cy="40" r="1.05"/><circle cx="850.6" cy="40" r="1.05"/>
</g>
<!-- toolbar: folder open -->
<path d="M861.5 40.3V34.7H864L864.9 35.7H867.6V37 M861.5 40.3L862.8 37H869L867.7 40.3Z" fill="none" stroke="#4257bc" stroke-width=".95" stroke-linejoin="round"/>
<!-- chevrons -->
<g stroke="#333" stroke-width="1.15" fill="none" stroke-linecap="round" stroke-linejoin="round">
<path d="M119.6 252.1L121.8 254.3L124 252.1"/>
<path d="M119.6 274.4L121.8 276.6L124 274.4"/>
<path d="M134.8 415.4L137 417.6L139.2 415.4"/>
</g>
<!-- refresh icons -->
<g stroke="#d3d8f3" stroke-width=".9" fill="none">
<path d="M146.4 251.6A2 2 0 1 0 146.8 253.4"/>
<path d="M146.4 273.8A2 2 0 1 0 146.8 275.6"/>
</g>
<path d="M145.4 250.3L147.2 250.7L146.5 252.3Z M145.4 272.5L147.2 272.9L146.5 274.5Z" fill="#d3d8f3"/>
<!-- sidebar: plus-circle -->
<g stroke="#fff" fill="none" stroke-width="1.35">
<circle cx="22.4" cy="399.7" r="6.9"/>
<path d="M22.4 395.9V403.5M18.6 399.7H26.2" stroke-width="1.4"/>
<!-- question circle -->
<circle cx="22.4" cy="499.8" r="6.9"/>
<path d="M20.3 498.2Q20.3 496 22.4 496Q24.6 496 24.6 498Q24.6 499.2 23.4 499.9Q22.4 500.5 22.4 501.7" stroke-width="1.5"/>
</g>
<circle cx="22.4" cy="503.6" r=".9" fill="#fff"/>
<!-- wrench -->
<g>
<path d="M16.4 439L24.6 430.9" stroke="#fff" stroke-width="3.3" stroke-linecap="round"/>
<circle cx="26" cy="429.7" r="4.15" fill="#fff"/>
<path d="M26.2 429.5L28.9 423.6L33 427.9Z" fill="#8692da"/>
<path d="M25.1 428.4L27.9 426L29.6 427.9L27.2 430.6Z" fill="#8692da"/>
</g>
<!-- android -->
<path d="M14.8 471.6Q15.2 466.6 19.4 465L18 462.7L18.7 462.3L20.2 464.7Q22.4 464 24.7 464.7L26.2 462.3L26.9 462.7L25.5 465Q29.7 466.6 30.1 471.6Z" fill="#fff"/>
<circle cx="19" cy="468.7" r=".85" fill="#8591d8"/><circle cx="25.9" cy="468.7" r=".85" fill="#8591d8"/>

</svg>
</div>
</body>
</html>
